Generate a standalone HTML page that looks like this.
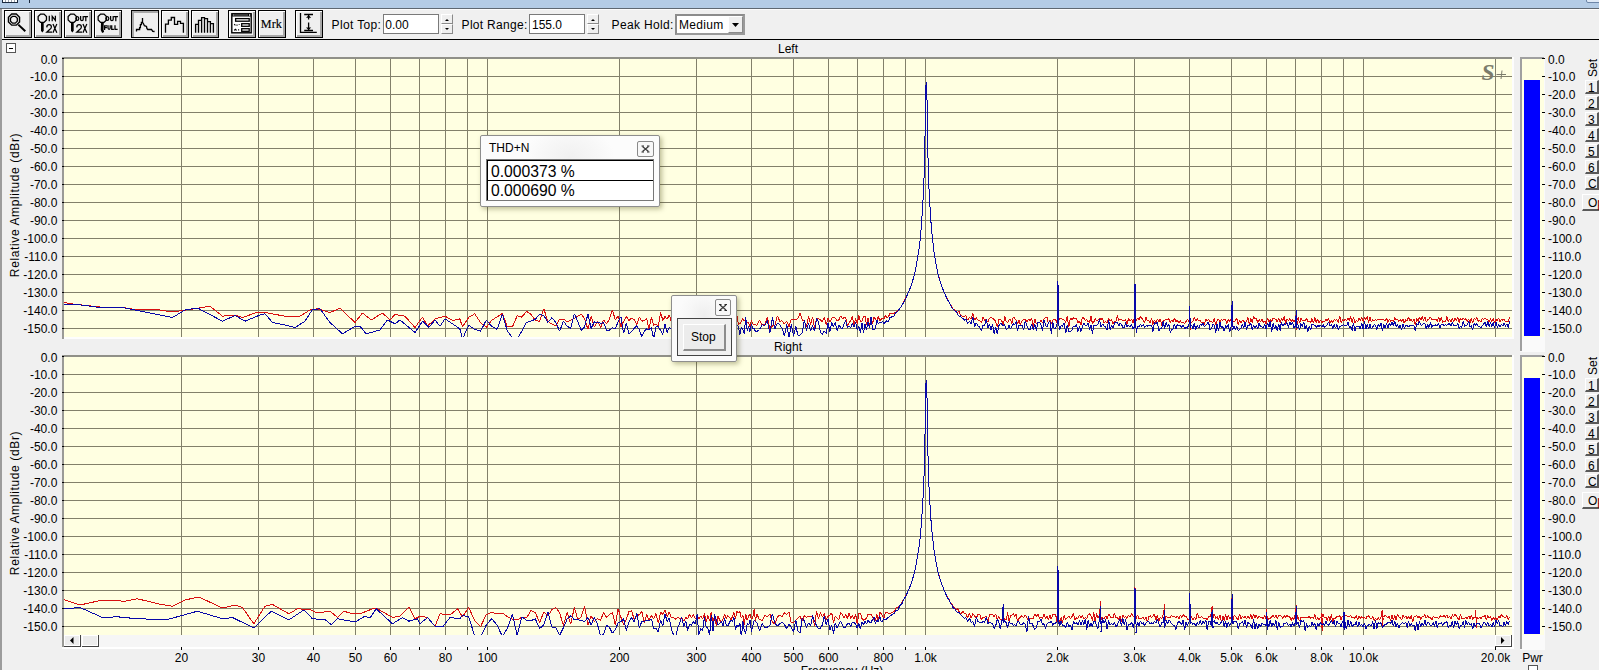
<!DOCTYPE html>
<html><head><meta charset="utf-8"><title>Spectrum</title>
<style>
html,body{margin:0;padding:0;}
body{width:1599px;height:670px;overflow:hidden;position:relative;background:#f0f0f0;font-family:"Liberation Sans", sans-serif;color:#000;}
</style></head><body>
<div style="position:absolute;left:0;top:0;width:1599px;height:8px;background:#b4cce6"></div>
<div style="position:absolute;left:0px;top:8px;width:1599px;height:1px;background:#5f6872"></div>
<div style="position:absolute;left:0px;top:9px;width:1599px;height:1px;background:#fcfcfc"></div>
<div style="position:absolute;left:0px;top:9px;width:2px;height:661px;background:#9c9c9c"></div>
<div style="position:absolute;left:2px;top:39px;width:1597px;height:1px;background:#000"></div>
<div style="position:absolute;left:2px;top:0px;width:16px;height:3px;background:#fff;border:0"></div>
<div style="position:absolute;left:2px;top:2px;width:16px;height:1px;background:#1b2a3e"></div>
<div style="position:absolute;left:5px;top:0px;width:1px;height:2px;background:#9aa4b0"></div>
<div style="position:absolute;left:8px;top:0px;width:1px;height:2px;background:#9aa4b0"></div>
<div style="position:absolute;left:11px;top:0px;width:1px;height:2px;background:#9aa4b0"></div>
<div style="position:absolute;left:14px;top:0px;width:1px;height:2px;background:#9aa4b0"></div>
<div style="position:absolute;left:2px;top:0px;width:1px;height:3px;background:#1b2a3e"></div>
<div style="position:absolute;left:17px;top:0px;width:1px;height:3px;background:#1b2a3e"></div>
<div style="position:absolute;left:29px;top:0px;width:1px;height:3px;background:#1b2a3e"></div>
<div style="position:absolute;left:1586px;top:-4px;width:20px;height:7px;box-sizing:border-box;border:1px solid #6d86a8;border-radius:2px;background:#dfeaf7"></div>
<div style="position:absolute;left:4px;top:10px;width:26px;height:26px;border:1px solid #000;background:#efefef;box-shadow:inset 1px 1px 0 #fff, inset -2px -2px 0 #a8a8a8"></div>
<div style="position:absolute;left:34px;top:10px;width:26px;height:26px;border:1px solid #000;background:#efefef;box-shadow:inset 1px 1px 0 #fff, inset -2px -2px 0 #a8a8a8"></div>
<div style="position:absolute;left:64px;top:10px;width:26px;height:26px;border:1px solid #000;background:#efefef;box-shadow:inset 1px 1px 0 #fff, inset -2px -2px 0 #a8a8a8"></div>
<div style="position:absolute;left:94px;top:10px;width:26px;height:26px;border:1px solid #000;background:#efefef;box-shadow:inset 1px 1px 0 #fff, inset -2px -2px 0 #a8a8a8"></div>
<div style="position:absolute;left:161px;top:10px;width:26px;height:26px;border:1px solid #000;background:#efefef;box-shadow:inset 1px 1px 0 #fff, inset -2px -2px 0 #a8a8a8"></div>
<div style="position:absolute;left:191px;top:10px;width:26px;height:26px;border:1px solid #000;background:#efefef;box-shadow:inset 1px 1px 0 #fff, inset -2px -2px 0 #a8a8a8"></div>
<div style="position:absolute;left:228px;top:10px;width:26px;height:26px;border:1px solid #000;background:#efefef;box-shadow:inset 1px 1px 0 #fff, inset -2px -2px 0 #a8a8a8"></div>
<div style="position:absolute;left:258px;top:10px;width:26px;height:26px;border:1px solid #000;background:#efefef;box-shadow:inset 1px 1px 0 #fff, inset -2px -2px 0 #a8a8a8"></div>
<div style="position:absolute;left:295px;top:10px;width:26px;height:26px;border:1px solid #000;background:#efefef;box-shadow:inset 1px 1px 0 #fff, inset -2px -2px 0 #a8a8a8"></div>
<div style="position:absolute;left:131px;top:10px;width:26px;height:26px;border:1px solid #000;background:#efefef;box-shadow:inset 2px 2px 0 #a8a8a8"></div>
<svg style="position:absolute;left:0;top:0" width="330" height="40" viewBox="0 0 330 40"><polygon points="19.54,21.90 16.30,25.14 11.70,25.14 8.46,21.90 8.46,17.30 11.70,14.06 16.30,14.06 19.54,17.30" fill="none" stroke="#000" stroke-width="1.4"/><polygon points="17.32,21.12 15.32,23.12 12.48,23.12 10.48,21.12 10.48,18.28 12.48,16.28 15.32,16.28 17.32,18.28" fill="none" stroke="#000" stroke-width="1.3"/><line x1="18.3" y1="24.6" x2="25.3" y2="31.3" stroke="#000" stroke-width="2"/><path d="M46.8,26.728 Q47.0,24.6 49.099999999999994,24.6 Q51.4,24.6 51.4,26.880000000000003 Q51.4,28.400000000000002 49.099999999999994,30.072000000000003 L46.8,32.2 H51.4" fill="none" stroke="#000" stroke-width="1.25" stroke-linecap="square" stroke-linejoin="miter"/><path d="M53.2,24.6 L56.6,32.2 M56.6,24.6 L53.2,32.2" fill="none" stroke="#000" stroke-width="1.25" stroke-linecap="square" stroke-linejoin="miter"/><path d="M76.8,26.728 Q77.0,24.6 79.1,24.6 Q81.39999999999999,24.6 81.39999999999999,26.880000000000003 Q81.39999999999999,28.400000000000002 79.1,30.072000000000003 L76.8,32.2 H81.39999999999999" fill="none" stroke="#000" stroke-width="1.25" stroke-linecap="square" stroke-linejoin="miter"/><path d="M83.2,24.6 L86.60000000000001,32.2 M86.60000000000001,24.6 L83.2,32.2" fill="none" stroke="#000" stroke-width="1.25" stroke-linecap="square" stroke-linejoin="miter"/><polygon points="46.46,20.02 44.02,22.46 40.58,22.46 38.14,20.02 38.14,16.58 40.58,14.14 44.02,14.14 46.46,16.58" fill="none" stroke="#000" stroke-width="1.3"/><path d="M41.0,22.5 h2.7 v8.3 l-1.35,1.8 l-1.35,-1.8 z" fill="#000"/><path d="M49.3,16.3 V20.5" fill="none" stroke="#000" stroke-width="1.25" stroke-linecap="square" stroke-linejoin="miter"/><path d="M52.2,20.5 V16.3 L55.400000000000006,20.5 V16.3" fill="none" stroke="#000" stroke-width="1.25" stroke-linecap="square" stroke-linejoin="miter"/><polygon points="76.46,20.02 74.02,22.46 70.58,22.46 68.14,20.02 68.14,16.58 70.58,14.14 74.02,14.14 76.46,16.58" fill="none" stroke="#000" stroke-width="1.3"/><path d="M71.0,22.5 h2.7 v8.3 l-1.35,1.8 l-1.35,-1.8 z" fill="#000"/><ellipse cx="77.3" cy="18.55" rx="1.5" ry="1.95" fill="none" stroke="#000" stroke-width="1.25"/><path d="M80.6,16.6 V19.135 Q80.6,20.5 81.89999999999999,20.5 Q83.19999999999999,20.5 83.19999999999999,19.135 V16.6" fill="none" stroke="#000" stroke-width="1.25" stroke-linecap="square" stroke-linejoin="miter"/><path d="M84.2,16.6 H87.4 M85.8,16.6 V20.5" fill="none" stroke="#000" stroke-width="1.25" stroke-linecap="square" stroke-linejoin="miter"/><polygon points="106.46,20.02 104.02,22.46 100.58,22.46 98.14,20.02 98.14,16.58 100.58,14.14 104.02,14.14 106.46,16.58" fill="none" stroke="#000" stroke-width="1.3"/><path d="M101.0,22.5 h2.8 l-0.3,7 l0.6,2.5 l-2,1 l-1.3,-3 z" fill="#000"/><ellipse cx="107.3" cy="18.55" rx="1.5" ry="1.95" fill="none" stroke="#000" stroke-width="1.25"/><path d="M110.6,16.6 V19.135 Q110.6,20.5 111.89999999999999,20.5 Q113.19999999999999,20.5 113.19999999999999,19.135 V16.6" fill="none" stroke="#000" stroke-width="1.25" stroke-linecap="square" stroke-linejoin="miter"/><path d="M114.2,16.6 H117.4 M115.8,16.6 V20.5" fill="none" stroke="#000" stroke-width="1.25" stroke-linecap="square" stroke-linejoin="miter"/><path d="M104.6,29.299999999999997 V25.9 H106.6 M104.6,27.599999999999998 H106.3" fill="none" stroke="#000" stroke-width="1.25" stroke-linecap="square" stroke-linejoin="miter"/><path d="M108.0,25.9 V28.11 Q108.0,29.299999999999997 109.1,29.299999999999997 Q110.2,29.299999999999997 110.2,28.11 V25.9" fill="none" stroke="#000" stroke-width="1.25" stroke-linecap="square" stroke-linejoin="miter"/><path d="M111.7,25.9 V29.299999999999997 H113.3" fill="none" stroke="#000" stroke-width="1.25" stroke-linecap="square" stroke-linejoin="miter"/><path d="M115.0,25.9 V29.299999999999997 H117.0" fill="none" stroke="#000" stroke-width="1.25" stroke-linecap="square" stroke-linejoin="miter"/><polyline points="136.5,31.6 136.5,29.5 139.6,29.5 139.6,27.6 140.4,27.6 140.4,24.7 141.4,24.7 141.4,22.4 142.5,22.4 142.5,18.1 142.5,22.4 143.5,23.8 144.4,25.7 146.5,26.5 146.9,28.4 147.7,29.5 151.5,29.5 152.7,31.3 154.6,31.5" fill="none" stroke="#000" stroke-width="1.3"/><polyline points="165.5,32.8 165.5,24.2 168.4,24.2 168.4,20.2 171.3,20.2 171.3,17.5 174.5,17.5 174.5,24.4 177.6,24.4 177.6,21.3 180.5,21.3 180.5,23.4 183.4,23.4 183.4,32.8" fill="none" stroke="#000" stroke-width="1.3"/><path d="M195.6,32.8 V24.3 H198.5 V20.3 H201.6 V17.6 H204.5 V18.7 H207.5 V21.6 H210.4 V23.6 H213.4 V32.8 M198.5,24.3 V32.8 M201.6,20.3 V32.8 M204.5,18.7 V32.8 M207.5,21.6 V32.8 M210.4,23.6 V32.8" fill="none" stroke="#000" stroke-width="1.3"/><rect x="231.8" y="13.8" width="19.4" height="19" fill="#fff" stroke="#000" stroke-width="1.4"/><rect x="232" y="13.5" width="19" height="3" fill="#000"/><path d="M234.5,15 H247.5" stroke="#fff" stroke-width="0.9" stroke-dasharray="1,1"/><rect x="249" y="14.3" width="1.2" height="1.4" fill="#fff"/><rect x="232.9" y="14.3" width="0.7" height="1.4" fill="#fff"/><rect x="235.6" y="18.6" width="13.6" height="2.6" fill="none" stroke="#000" stroke-width="1.3"/><rect x="241.7" y="23.7" width="7.5" height="2.6" fill="none" stroke="#000" stroke-width="1.3"/><rect x="241.7" y="28.7" width="7.5" height="2.6" fill="none" stroke="#000" stroke-width="1.3"/><path d="M234.2,24.2 l1.2,1.2 M237,24.5 v1.3 M239.2,24.3 v0.8 M234.2,30.3 l1.2,-1.1 l1.2,1.1 M238.6,29.2 v1.4" stroke="#000" stroke-width="1.1"/><text x="260.8" y="27.9" font-family="Liberation Serif" font-size="13.2" stroke="#000" stroke-width="0.15" textLength="21" lengthAdjust="spacingAndGlyphs">Mrk</text><path d="M300.5,13 V32.4 H316.8" fill="none" stroke="#000" stroke-width="1.3"/><path d="M304.2,14.5 H313 M304.2,30.5 H313 M308.6,15 V19.5 M308.6,22.5 V30" fill="none" stroke="#000" stroke-width="1.3"/><path d="M306,17.8 L308.6,15.3 L311.2,17.8 Z M306,27.6 L308.6,30.1 L311.2,27.6 Z" fill="#000"/></svg>
<div style="position:absolute;left:331.6px;top:18.84px;font-size:12px;line-height:12px;white-space:nowrap;color:#000;letter-spacing:0.35px">Plot Top:</div>
<div style="position:absolute;left:383px;top:14px;width:56px;height:20px;box-sizing:border-box;border:1px solid #7a7a7a;background:#fff"></div>
<div style="position:absolute;left:385.3px;top:18.54px;font-size:12px;line-height:12px;white-space:nowrap;color:#000;">0.00</div>
<div style="position:absolute;left:461.6px;top:18.84px;font-size:12px;line-height:12px;white-space:nowrap;color:#000;letter-spacing:0.3px">Plot Range:</div>
<div style="position:absolute;left:529px;top:14px;width:56px;height:20px;box-sizing:border-box;border:1px solid #7a7a7a;background:#fff"></div>
<div style="position:absolute;left:532px;top:18.84px;font-size:12px;line-height:12px;white-space:nowrap;color:#000;">155.0</div>
<div style="position:absolute;left:441px;top:14px;width:12px;height:10px;box-sizing:border-box;background:#efefef;border-right:1px solid #8a8a8a;border-bottom:1px solid #8a8a8a;border-left:1px solid #fff;border-top:1px solid #fff"></div>
<div style="position:absolute;left:441px;top:24px;width:12px;height:10px;box-sizing:border-box;background:#efefef;border-right:1px solid #8a8a8a;border-bottom:1px solid #8a8a8a;border-left:1px solid #fff;border-top:1px solid #fff"></div>
<svg style="position:absolute;left:441px;top:14px" width="12" height="20"><path d="M4,7 h4 l-2,-2 z M4,14 h4 l-2,2 z" fill="#000"/></svg>
<div style="position:absolute;left:587px;top:14px;width:12px;height:10px;box-sizing:border-box;background:#efefef;border-right:1px solid #8a8a8a;border-bottom:1px solid #8a8a8a;border-left:1px solid #fff;border-top:1px solid #fff"></div>
<div style="position:absolute;left:587px;top:24px;width:12px;height:10px;box-sizing:border-box;background:#efefef;border-right:1px solid #8a8a8a;border-bottom:1px solid #8a8a8a;border-left:1px solid #fff;border-top:1px solid #fff"></div>
<svg style="position:absolute;left:587px;top:14px" width="12" height="20"><path d="M4,7 h4 l-2,-2 z M4,14 h4 l-2,2 z" fill="#000"/></svg>
<div style="position:absolute;left:611.6px;top:18.84px;font-size:12px;line-height:12px;white-space:nowrap;color:#000;letter-spacing:0.33px">Peak Hold:</div>
<div style="position:absolute;left:675px;top:14px;width:70px;height:21px;box-sizing:border-box;border:2px solid #8c8c8c;border-right-color:#9a9a9a;border-bottom-color:#9a9a9a;background:#fff"></div>
<div style="position:absolute;left:679px;top:19.34px;font-size:12px;line-height:12px;white-space:nowrap;color:#000;letter-spacing:0.3px">Medium</div>
<div style="position:absolute;left:728px;top:16px;width:15px;height:17px;box-sizing:border-box;background:#efefef;border-right:1px solid #8a8a8a;border-bottom:1px solid #8a8a8a;border-left:1px solid #fff;border-top:1px solid #fff"></div>
<svg style="position:absolute;left:728px;top:16px" width="15" height="17"><path d="M4,7 h7 l-3.5,4 z" fill="#000"/></svg>
<div style="position:absolute;left:6px;top:43px;width:10px;height:10px;box-sizing:border-box;border:1px solid #555;background:#fff"></div>
<div style="position:absolute;left:9px;top:48px;width:4px;height:1px;background:#000"></div>
<div style="position:absolute;left:588px;width:400px;text-align:center;top:42.84px;font-size:12px;line-height:12px;white-space:nowrap;color:#000;">Left</div>
<div style="position:absolute;left:588px;width:400px;text-align:center;top:340.84px;font-size:12px;line-height:12px;white-space:nowrap;color:#000;">Right</div>
<svg style="position:absolute;left:0;top:0" width="1599" height="670" viewBox="0 0 1599 670" shape-rendering="auto"><rect x="62" y="57" width="1452" height="282" fill="#fdfdfd"/><rect x="62" y="57" width="1450" height="2" fill="#909088"/><rect x="62" y="57" width="2" height="282" fill="#9a9a96"/><rect x="64" y="59" width="1448" height="278" fill="#ffffe1"/><path d="M64,76.5H1512M64,94.5H1512M64,112.5H1512M64,130.5H1512M64,148.5H1512M64,166.5H1512M64,184.5H1512M64,202.5H1512M64,220.5H1512M64,238.5H1512M64,256.5H1512M64,274.5H1512M64,292.5H1512M64,310.5H1512M64,328.5H1512M181.5,59V337M258.5,59V337M313.5,59V337M355.5,59V337M390.5,59V337M419.5,59V337M445.5,59V337M467.5,59V337M487.5,59V337M619.5,59V337M696.5,59V337M751.5,59V337M793.5,59V337M828.5,59V337M857.5,59V337M883.5,59V337M905.5,59V337M925.5,59V337M1057.5,59V337M1134.5,59V337M1189.5,59V337M1231.5,59V337M1266.5,59V337M1295.5,59V337M1321.5,59V337M1343.5,59V337M1363.5,59V337M1495.5,59V337" stroke="#82806a" stroke-width="1" fill="none"/><path d="M62,58.5H64M62,76.5H64M62,94.5H64M62,112.5H64M62,130.5H64M62,148.5H64M62,166.5H64M62,184.5H64M62,202.5H64M62,220.5H64M62,238.5H64M62,256.5H64M62,274.5H64M62,292.5H64M62,310.5H64M62,328.5H64" stroke="#000" stroke-width="1"/><rect x="62" y="355" width="1452" height="294" fill="#fdfdfd"/><rect x="62" y="355" width="1450" height="2" fill="#909088"/><rect x="62" y="355" width="2" height="292" fill="#9a9a96"/><rect x="64" y="357" width="1448" height="278" fill="#ffffe1"/><path d="M64,374.5H1512M64,392.5H1512M64,410.5H1512M64,428.5H1512M64,446.5H1512M64,464.5H1512M64,482.5H1512M64,500.5H1512M64,518.5H1512M64,536.5H1512M64,554.5H1512M64,572.5H1512M64,590.5H1512M64,608.5H1512M64,626.5H1512M181.5,357V635M258.5,357V635M313.5,357V635M355.5,357V635M390.5,357V635M419.5,357V635M445.5,357V635M467.5,357V635M487.5,357V635M619.5,357V635M696.5,357V635M751.5,357V635M793.5,357V635M828.5,357V635M857.5,357V635M883.5,357V635M905.5,357V635M925.5,357V635M1057.5,357V635M1134.5,357V635M1189.5,357V635M1231.5,357V635M1266.5,357V635M1295.5,357V635M1321.5,357V635M1343.5,357V635M1363.5,357V635M1495.5,357V635" stroke="#82806a" stroke-width="1" fill="none"/><path d="M62,356.5H64M62,374.5H64M62,392.5H64M62,410.5H64M62,428.5H64M62,446.5H64M62,464.5H64M62,482.5H64M62,500.5H64M62,518.5H64M62,536.5H64M62,554.5H64M62,572.5H64M62,590.5H64M62,608.5H64M62,626.5H64" stroke="#000" stroke-width="1"/><defs><clipPath id="c1"><rect x="64" y="59" width="1448" height="278"/></clipPath><clipPath id="c2"><rect x="64" y="357" width="1448" height="278"/></clipPath></defs><g clip-path="url(#c1)"><polyline points="63.8,302.5 72.5,304.0 100.0,307.0 122.5,307.5 135.0,309.5 160.0,310.0 172.5,312.0 182.5,310.5 190.0,309.5 210.0,306.2 222.5,316.2 235.0,315.0 242.5,317.5 255.0,313.0 265.0,312.5 285.0,316.2 300.0,316.2 310.0,310.0 317.5,308.8 330.0,312.5 340.0,308.2 355.0,322.5 362.5,313.0 371.2,320.0 382.5,313.0 390.0,320.0 395.0,314.5 405.0,316.2 415.0,327.5 422.5,317.0 427.5,326.2 435.0,318.8 445.0,316.2 452.5,320.5 459.8,318.8 462.5,326.8 468.7,317.4 474.7,313.8 480.6,322.6 486.3,327.3 491.8,320.1 497.1,317.0 502.4,313.4 507.4,326.6 512.4,327.0 517.2,315.8 521.9,317.1 526.5,311.2 530.9,314.3 535.3,320.3 539.6,321.3 543.8,308.8 547.9,321.4 551.9,324.1 555.8,326.0 559.6,319.3 563.4,319.1 567.1,321.7 570.7,320.2 574.3,318.4 577.8,316.2 581.2,314.1 584.6,318.8 587.9,329.3 591.1,316.2 594.3,327.3 597.5,320.8 600.6,327.5 603.6,319.9 606.6,323.9 609.5,318.8 612.4,309.7 615.3,320.2 618.1,315.7 620.9,326.7 623.6,321.4 626.3,316.6 629.0,320.4 631.6,318.1 634.2,319.5 636.8,325.0 639.3,317.2 641.8,321.1 644.2,320.8 646.6,318.2 649.0,329.6 651.4,317.4 653.7,325.4 656.0,324.0 658.3,326.4 660.6,312.0 662.8,320.7 665.0,316.6 667.2,319.2 669.3,315.0 671.4,321.8 673.5,321.2 675.6,323.2 677.7,316.9 679.7,320.9 681.7,322.1 683.7,327.1 685.7,315.1 687.6,318.6 689.6,318.6 691.5,322.2 693.4,316.8 695.3,323.8 697.1,320.3 698.9,329.4 700.8,316.1 702.6,319.4 704.4,319.9 706.1,319.9 707.9,320.9 709.6,320.0 711.3,319.1 713.0,323.7 714.7,321.7 716.4,319.3 718.1,319.8 719.7,319.1 721.4,323.4 723.0,321.3 724.6,320.0 726.2,318.3 727.7,322.0 729.3,321.0 730.9,318.4 732.4,319.3 733.9,318.0 735.5,319.9 737.0,315.8 738.4,324.4 739.9,323.7 741.4,321.5 742.9,318.5 744.3,321.0 745.7,319.1 747.2,322.6 748.6,322.4 750.0,327.2 751.4,320.1 752.8,323.8 754.1,324.7 755.5,324.9 756.8,325.5 759.5,320.0 762.2,325.0 764.8,324.9 767.3,316.7 769.9,328.6 772.4,326.0 774.9,325.7 777.3,315.7 779.7,321.2 782.1,320.8 784.4,324.1 786.7,320.9 789.0,326.5 791.3,319.3 793.5,319.2 795.8,319.3 797.9,318.6 800.1,313.2 802.2,319.7 804.4,321.2 806.4,327.2 808.5,316.1 810.6,324.4 812.6,316.9 814.6,327.9 816.6,318.6 818.5,318.8 820.5,319.9 822.4,321.9 824.3,316.8 826.2,324.8 828.0,318.3 829.9,322.1 831.7,318.2 833.5,317.3 835.3,318.2 837.1,321.0 838.9,319.7 840.6,315.8 842.3,318.8 844.0,317.7 845.7,317.7 847.4,325.3 849.1,323.2 850.8,320.2 852.4,316.6 854.0,325.6 855.6,318.6 857.2,324.0 858.8,315.2 860.4,321.7 861.9,321.1 863.5,316.2 865.0,316.0 866.5,325.1 868.1,317.7 869.6,325.9 871.0,320.1 872.5,323.7 874.0,317.2 875.4,319.2 876.9,321.4 878.3,315.8 879.7,321.1 881.1,319.3 882.5,318.5 883.9,319.0 885.3,315.8 886.7,317.2 888.0,317.4 890.0,313.5 892.0,313.0 894.0,313.4 896.0,311.8 897.9,310.7 899.8,308.7 901.7,305.7 903.6,301.7 905.5,298.7 907.3,294.8 909.1,290.5 911.0,286.1 912.7,280.6 914.5,274.1 916.3,265.5 918.0,255.2 919.7,244.6 920.3,237.8 920.9,230.9 921.5,224.1 922.0,216.2 922.6,206.7 923.2,197.3 923.7,185.3 924.3,172.4 924.8,149.1 925.4,110.7 925.9,86.6 926.3,81.9 926.5,84.6 927.1,102.3 927.6,137.4 928.2,167.5 928.7,181.0 929.2,193.6 929.8,203.0 930.3,212.1 930.9,220.9 931.4,227.4 932.0,233.8 933.6,249.1 935.1,258.5 936.7,267.9 938.3,274.9 939.8,280.5 941.4,285.4 942.9,289.0 944.4,292.8 945.9,296.2 947.4,298.7 948.9,301.6 950.4,304.4 951.8,306.7 953.3,309.7 954.7,309.2 956.1,311.7 957.6,312.1 959.0,311.5 960.4,315.3 961.7,316.0 963.1,317.1 964.5,316.3 965.8,315.7 967.6,320.0 969.4,317.6 971.1,318.8 972.9,313.2 974.6,320.0 976.3,317.7 978.0,320.3 979.7,320.3 981.4,322.8 983.0,317.1 984.6,320.3 986.3,319.7 987.9,322.1 989.5,318.1 991.1,317.3 992.6,318.3 994.2,319.4 995.7,321.5 997.3,327.3 998.8,319.7 1000.3,318.9 1001.8,320.8 1003.3,326.4 1004.7,316.2 1006.2,321.3 1007.6,322.8 1009.1,319.9 1010.5,319.0 1011.9,324.0 1013.3,317.0 1014.7,318.4 1016.1,320.2 1017.5,324.2 1018.9,319.7 1020.2,324.4 1021.9,321.3 1023.6,319.1 1025.2,319.1 1026.9,322.0 1028.5,319.0 1030.1,321.0 1031.7,318.2 1033.3,327.0 1034.8,318.8 1036.4,323.8 1037.9,322.1 1039.5,322.4 1041.0,320.4 1042.5,323.1 1044.0,318.8 1045.5,317.4 1047.0,317.3 1048.4,323.2 1049.9,320.2 1051.3,323.8 1052.7,320.2 1054.2,319.6 1055.6,319.6 1057.0,322.4 1057.4,322.4 1057.9,303.7 1058.4,321.7 1058.9,324.2 1058.4,321.0 1059.7,318.2 1061.1,317.9 1062.5,320.0 1064.1,319.8 1065.7,322.4 1067.3,316.4 1068.8,327.1 1070.4,318.0 1072.0,319.6 1073.5,317.8 1075.0,318.9 1076.5,318.5 1078.0,322.6 1079.5,321.1 1081.0,325.0 1082.5,316.8 1083.9,318.3 1085.4,320.8 1086.8,319.3 1088.2,321.7 1089.6,322.4 1091.0,316.1 1092.4,323.6 1093.8,322.1 1095.2,318.4 1096.5,320.5 1097.9,320.3 1099.5,318.5 1101.0,319.3 1102.6,318.4 1104.1,323.1 1105.6,321.6 1107.1,323.0 1108.6,318.7 1110.1,320.9 1111.5,319.5 1113.0,323.8 1114.5,321.7 1115.9,321.8 1117.3,315.6 1118.7,320.3 1120.1,319.0 1121.5,319.9 1122.9,320.8 1124.3,320.7 1125.6,319.7 1127.0,324.4 1128.5,318.6 1130.1,321.0 1131.6,319.3 1133.1,323.1 1134.6,316.8 1134.5,316.8 1135.0,303.7 1135.5,321.7 1136.0,318.6 1136.0,321.1 1137.5,318.1 1139.0,319.8 1140.4,316.7 1141.8,318.2 1143.2,320.3 1144.7,322.3 1146.1,317.2 1147.4,320.6 1148.8,320.3 1150.2,322.9 1151.6,318.4 1152.9,324.8 1154.4,320.0 1155.9,323.3 1157.4,319.1 1158.9,322.0 1160.3,318.8 1161.8,326.1 1163.2,320.7 1164.6,320.3 1166.1,319.0 1167.5,320.0 1168.9,318.5 1170.3,322.9 1171.6,319.8 1173.0,322.2 1174.4,318.0 1175.9,321.5 1177.3,320.3 1178.8,322.8 1180.3,320.7 1181.7,322.7 1183.2,322.3 1184.6,323.9 1186.0,321.6 1187.4,318.9 1188.8,321.9 1189.2,321.9 1189.7,311.8 1190.2,329.8 1190.7,323.7 1190.2,322.5 1191.6,322.2 1192.9,321.0 1194.3,317.3 1195.8,321.2 1197.3,318.6 1198.7,321.1 1200.2,319.9 1201.6,323.1 1203.0,322.1 1204.4,324.5 1205.9,319.4 1207.2,320.7 1208.6,319.0 1210.0,321.9 1211.4,321.8 1212.7,322.4 1214.2,318.6 1215.7,324.5 1217.1,320.5 1218.5,319.1 1220.0,321.4 1221.4,319.8 1222.8,320.4 1224.2,319.2 1225.6,320.1 1226.9,323.8 1228.3,319.2 1229.6,321.8 1231.1,319.2 1231.6,319.2 1232.1,306.4 1232.6,324.4 1233.1,321.0 1232.5,321.4 1234.0,322.0 1235.4,320.8 1236.8,317.7 1238.2,324.6 1239.6,319.8 1241.0,323.1 1242.4,320.2 1243.7,321.2 1245.1,322.4 1246.5,321.6 1247.9,317.1 1249.4,325.2 1250.8,318.1 1252.2,322.6 1253.6,316.3 1255.0,319.3 1256.3,317.8 1257.7,323.1 1259.0,319.6 1260.5,321.8 1261.9,318.8 1263.3,322.4 1264.7,321.0 1266.1,323.7 1267.5,317.8 1268.9,321.8 1270.3,319.1 1271.6,321.6 1273.1,318.2 1274.5,319.0 1275.9,319.1 1277.3,322.2 1278.7,318.2 1280.1,322.7 1281.4,318.4 1282.8,320.9 1284.2,316.5 1285.6,323.4 1287.0,319.4 1288.4,320.6 1289.8,318.5 1291.2,321.8 1292.6,319.4 1293.9,321.8 1295.3,319.9 1295.7,319.9 1296.2,311.8 1296.7,329.8 1297.2,321.7 1296.7,320.2 1298.1,317.6 1299.6,323.2 1300.9,318.0 1302.3,320.9 1303.7,320.3 1305.1,320.7 1306.4,318.2 1307.9,321.4 1309.3,321.5 1310.7,322.4 1312.0,318.6 1313.4,323.1 1314.8,317.5 1316.2,322.6 1317.6,318.9 1319.0,322.7 1320.4,319.9 1321.8,322.4 1323.2,321.5 1324.5,321.8 1325.9,319.5 1327.2,321.0 1328.6,318.4 1330.0,322.5 1331.4,320.2 1332.8,322.9 1334.2,319.3 1335.5,320.4 1336.9,319.7 1338.3,322.5 1339.7,316.0 1341.1,322.5 1342.5,319.6 1343.8,320.9 1345.2,319.0 1346.6,320.3 1348.0,318.2 1349.4,320.6 1350.7,316.2 1352.1,322.5 1353.5,317.3 1354.9,322.6 1356.3,320.5 1357.6,322.0 1359.0,318.6 1360.4,320.4 1361.7,317.4 1363.1,321.6 1364.5,317.1 1365.9,319.7 1367.2,316.4 1368.6,323.1 1370.0,317.5 1371.4,322.1 1372.8,319.7 1374.1,320.5 1375.5,319.7 1376.9,320.2 1378.3,319.7 1379.6,319.8 1381.0,319.0 1382.4,319.9 1383.7,319.5 1385.1,321.3 1386.5,317.7 1387.9,322.5 1389.3,318.9 1390.6,321.5 1392.0,320.4 1393.4,321.4 1394.8,317.6 1396.1,320.1 1397.5,319.2 1398.9,321.4 1400.2,319.4 1401.6,321.3 1403.0,319.5 1404.3,323.3 1405.7,319.7 1407.1,321.0 1408.4,317.0 1409.8,320.6 1411.2,319.6 1412.6,321.5 1413.9,318.8 1415.3,324.7 1416.7,318.6 1418.1,321.6 1419.4,317.0 1420.8,320.2 1422.2,316.4 1423.5,320.7 1424.9,316.8 1426.3,322.3 1427.6,319.8 1429.0,319.4 1430.4,316.8 1431.8,319.3 1433.1,319.7 1434.5,319.3 1435.9,319.4 1437.2,321.4 1438.6,317.2 1440.0,321.4 1441.3,316.9 1442.7,322.6 1444.0,321.0 1445.4,322.2 1446.8,316.4 1448.2,322.1 1449.5,319.0 1450.9,321.9 1452.3,318.6 1453.6,321.7 1455.0,318.1 1456.4,321.1 1457.7,316.8 1459.1,322.4 1460.5,317.9 1461.8,320.1 1463.2,318.3 1464.6,319.3 1465.9,318.9 1467.3,321.9 1468.7,318.9 1470.0,322.9 1471.4,318.3 1472.7,323.3 1474.1,318.3 1475.5,319.8 1476.8,317.0 1478.2,321.1 1479.6,320.8 1480.9,321.9 1482.3,318.3 1483.7,319.7 1485.0,317.9 1486.4,319.9 1487.8,319.6 1489.1,322.1 1490.5,318.6 1491.8,321.4 1493.2,318.6 1494.6,322.6 1495.9,319.4 1497.3,320.8 1498.7,317.8 1500.0,321.9 1501.4,319.0 1502.7,320.2 1504.1,319.4 1505.5,322.1 1506.8,321.0 1508.2,321.4 1509.6,316.9" fill="none" stroke="#d81010" stroke-width="1" stroke-linejoin="bevel" shape-rendering="crispEdges"/><polyline points="63.8,305.0 75.0,304.2 100.0,307.5 122.5,307.5 172.5,317.5 185.0,310.0 197.5,308.0 222.5,321.2 235.0,315.5 245.0,321.2 260.0,315.0 265.0,313.8 272.5,322.5 285.0,325.0 295.0,327.5 305.0,321.2 312.5,309.5 320.0,308.8 330.0,322.5 342.5,333.8 355.0,326.2 360.0,326.2 366.2,333.8 380.0,330.0 387.5,320.0 395.0,323.8 400.0,320.0 415.0,332.5 422.5,321.2 428.8,327.5 435.0,320.0 440.0,326.2 445.0,318.8 459.8,328.8 462.5,339.0 468.7,325.2 474.7,329.3 480.6,331.1 486.3,320.1 491.8,326.4 497.1,329.3 502.4,314.3 507.4,331.1 512.4,337.6 517.2,338.5 521.9,331.3 526.5,322.4 530.9,321.1 535.3,319.2 539.6,314.4 543.8,315.3 547.9,322.4 551.9,317.8 555.8,322.3 559.6,331.2 563.4,321.1 567.1,326.2 570.7,328.2 574.3,313.8 577.8,321.5 581.2,330.3 584.6,327.0 587.9,314.0 591.1,328.4 594.3,321.8 597.5,322.5 600.6,323.2 603.6,322.8 606.6,330.2 609.5,330.1 612.4,327.7 615.3,329.2 618.1,321.4 620.9,316.8 623.6,333.3 626.3,323.1 629.0,334.0 631.6,331.7 634.2,328.2 636.8,325.8 639.3,329.8 641.8,336.7 644.2,331.2 646.6,328.9 649.0,329.5 651.4,327.6 653.7,338.8 656.0,326.6 658.3,326.4 660.6,330.7 662.8,334.3 665.0,324.0 667.2,332.5 669.3,326.9 671.4,329.9 673.5,322.0 675.6,331.9 677.7,324.5 679.7,324.4 681.7,327.2 683.7,324.2 685.7,326.7 687.6,327.7 689.6,325.0 691.5,329.9 693.4,323.4 695.3,339.0 697.1,335.1 698.9,325.2 700.8,324.1 702.6,331.3 704.4,327.8 706.1,332.6 707.9,326.9 709.6,327.3 711.3,322.6 713.0,324.0 714.7,326.6 716.4,327.3 718.1,321.6 719.7,330.5 721.4,327.6 723.0,329.5 724.6,320.7 726.2,337.7 727.7,332.3 729.3,335.5 730.9,322.0 732.4,332.6 733.9,326.6 735.5,330.1 737.0,324.8 738.4,326.5 739.9,334.9 741.4,326.7 742.9,329.9 744.3,333.6 745.7,317.0 747.2,330.7 748.6,326.3 750.0,331.5 751.4,323.7 752.8,328.9 754.1,327.7 755.5,331.9 756.8,331.7 759.5,329.5 762.2,324.6 764.8,325.6 767.3,320.4 769.9,333.1 772.4,317.6 774.9,329.2 777.3,323.1 779.7,324.7 782.1,328.3 784.4,335.7 786.7,324.5 789.0,338.2 791.3,323.8 793.5,336.1 795.8,326.4 797.9,335.2 800.1,335.0 802.2,332.7 804.4,320.2 806.4,330.4 808.5,323.2 810.6,331.1 812.6,325.4 814.6,331.3 816.6,317.9 818.5,322.5 820.5,332.5 822.4,334.3 824.3,330.9 826.2,333.4 828.0,322.7 829.9,331.6 831.7,322.2 833.5,326.7 835.3,322.2 837.1,330.8 838.9,324.7 840.6,327.4 842.3,328.9 844.0,324.2 845.7,320.2 847.4,327.5 849.1,326.5 850.8,327.8 852.4,323.5 854.0,327.0 855.6,322.3 857.2,330.0 858.8,325.7 860.4,332.6 861.9,322.8 863.5,332.6 865.0,324.3 866.5,330.0 868.1,321.7 869.6,328.2 871.0,317.1 872.5,329.2 874.0,329.7 875.4,328.8 876.9,320.3 878.3,323.6 879.7,322.0 881.1,323.2 882.5,321.5 883.9,323.8 885.3,322.0 886.7,320.8 888.0,322.1 890.0,317.6 892.0,316.8 894.0,316.1 896.0,312.6 897.9,311.1 899.8,308.4 901.7,305.7 903.6,302.5 905.5,298.7 907.3,295.0 909.1,290.6 911.0,286.1 912.7,280.6 914.5,274.1 916.3,265.5 918.0,255.2 919.7,244.6 920.3,237.8 920.9,230.9 921.5,224.1 922.0,216.2 922.6,206.7 923.2,197.3 923.7,185.3 924.3,172.4 924.8,149.1 925.4,110.7 925.9,86.6 926.3,81.9 926.5,84.6 927.1,102.3 927.6,137.4 928.2,167.5 928.7,181.0 929.2,193.6 929.8,203.0 930.3,212.1 930.9,220.9 931.4,227.4 932.0,233.8 933.6,249.1 935.1,258.5 936.7,267.9 938.3,274.9 939.8,280.6 941.4,285.5 942.9,289.2 944.4,293.0 945.9,296.4 947.4,299.5 948.9,302.1 950.4,305.1 951.8,307.6 953.3,309.3 954.7,311.0 956.1,311.7 957.6,314.0 959.0,316.3 960.4,315.9 961.7,317.8 963.1,318.3 964.5,320.3 965.8,319.0 967.6,324.0 969.4,321.2 971.1,323.5 972.9,317.1 974.6,326.5 976.3,322.8 978.0,326.0 979.7,327.1 981.4,331.1 983.0,324.9 984.6,325.5 986.3,319.3 987.9,328.1 989.5,324.5 991.1,329.7 992.6,324.0 994.2,334.4 995.7,326.9 997.3,334.1 998.8,325.8 1000.3,323.2 1001.8,324.1 1003.3,326.1 1004.7,324.7 1006.2,329.3 1007.6,328.6 1009.1,325.3 1010.5,328.9 1011.9,326.2 1013.3,323.6 1014.7,325.2 1016.1,321.4 1017.5,331.4 1018.9,324.8 1020.2,326.1 1021.9,325.1 1023.6,329.9 1025.2,321.2 1026.9,325.8 1028.5,329.1 1030.1,329.4 1031.7,324.2 1033.3,329.5 1034.8,324.3 1036.4,330.6 1037.9,321.9 1039.5,322.5 1041.0,324.8 1042.5,330.6 1044.0,320.0 1045.5,325.0 1047.0,327.3 1048.4,322.6 1049.9,321.0 1051.3,334.2 1052.7,322.1 1054.2,328.8 1055.6,328.4 1057.0,323.6 1057.4,323.6 1057.9,281.2 1058.4,299.2 1058.9,325.4 1058.4,322.6 1059.7,330.0 1061.1,325.5 1062.5,326.4 1064.1,322.6 1065.7,333.1 1067.3,324.8 1068.8,331.7 1070.4,331.3 1072.0,330.0 1073.5,325.8 1075.0,327.1 1076.5,324.1 1078.0,331.4 1079.5,326.1 1081.0,331.4 1082.5,325.7 1083.9,323.4 1085.4,325.9 1086.8,325.6 1088.2,322.8 1089.6,329.4 1091.0,325.2 1092.4,333.9 1093.8,325.1 1095.2,325.3 1096.5,326.0 1097.9,324.1 1099.5,319.3 1101.0,327.1 1102.6,323.8 1104.1,326.1 1105.6,326.9 1107.1,330.2 1108.6,319.8 1110.1,329.8 1111.5,325.2 1113.0,328.2 1114.5,323.0 1115.9,322.5 1117.3,322.5 1118.7,326.2 1120.1,323.4 1121.5,324.1 1122.9,327.9 1124.3,327.9 1125.6,322.3 1127.0,326.8 1128.5,325.1 1130.1,327.2 1131.6,324.3 1133.1,328.9 1134.6,326.5 1134.5,326.5 1135.0,283.9 1135.5,301.9 1136.0,328.3 1136.0,332.9 1137.5,327.0 1139.0,326.5 1140.4,324.2 1141.8,326.5 1143.2,324.4 1144.7,327.3 1146.1,325.9 1147.4,326.1 1148.8,325.2 1150.2,325.5 1151.6,325.3 1152.9,331.8 1154.4,322.3 1155.9,323.5 1157.4,322.3 1158.9,330.6 1160.3,328.7 1161.8,328.5 1163.2,320.7 1164.6,328.8 1166.1,322.4 1167.5,326.6 1168.9,324.3 1170.3,332.6 1171.6,329.7 1173.0,329.2 1174.4,323.9 1175.9,329.0 1177.3,324.5 1178.8,325.7 1180.3,325.5 1181.7,327.4 1183.2,325.2 1184.6,329.0 1186.0,327.2 1187.4,328.5 1188.8,323.9 1189.2,323.9 1189.7,306.4 1190.2,324.4 1190.7,325.7 1190.2,328.0 1191.6,324.7 1192.9,329.0 1194.3,323.3 1195.8,330.0 1197.3,325.1 1198.7,328.3 1200.2,324.3 1201.6,325.2 1203.0,323.2 1204.4,326.6 1205.9,325.0 1207.2,323.5 1208.6,322.0 1210.0,330.2 1211.4,328.6 1212.7,324.6 1214.2,325.0 1215.7,332.7 1217.1,324.0 1218.5,330.9 1220.0,322.2 1221.4,328.2 1222.8,326.7 1224.2,331.3 1225.6,325.0 1226.9,327.4 1228.3,324.1 1229.6,332.2 1231.1,326.3 1231.6,326.3 1232.1,301.5 1232.6,319.5 1233.1,328.1 1232.5,329.7 1234.0,326.1 1235.4,329.9 1236.8,325.9 1238.2,331.1 1239.6,329.6 1241.0,328.1 1242.4,324.2 1243.7,328.3 1245.1,321.7 1246.5,330.0 1247.9,325.4 1249.4,325.5 1250.8,323.6 1252.2,329.7 1253.6,325.4 1255.0,328.2 1256.3,325.4 1257.7,329.1 1259.0,322.9 1260.5,326.6 1261.9,326.9 1263.3,327.4 1264.7,324.3 1266.1,328.8 1267.5,322.8 1268.9,327.1 1270.3,321.1 1271.6,332.0 1273.1,323.1 1274.5,328.7 1275.9,325.6 1277.3,330.6 1278.7,323.9 1280.1,330.6 1281.4,322.0 1282.8,326.0 1284.2,323.9 1285.6,324.4 1287.0,322.6 1288.4,327.9 1289.8,321.9 1291.2,325.0 1292.6,322.1 1293.9,328.0 1295.3,326.2 1295.7,326.2 1296.2,310.0 1296.7,328.0 1297.2,328.0 1296.7,324.3 1298.1,324.8 1299.6,329.7 1300.9,323.4 1302.3,326.9 1303.7,321.8 1305.1,329.3 1306.4,325.0 1307.9,331.9 1309.3,325.9 1310.7,330.1 1312.0,324.0 1313.4,325.0 1314.8,325.1 1316.2,327.7 1317.6,325.5 1319.0,326.4 1320.4,325.0 1321.8,327.1 1323.2,324.7 1324.5,327.5 1325.9,326.5 1327.2,324.6 1328.6,322.0 1330.0,326.2 1331.4,324.1 1332.8,328.5 1334.2,324.4 1335.5,328.3 1336.9,324.4 1338.3,330.3 1339.7,326.5 1341.1,325.9 1342.5,325.5 1343.8,324.7 1345.2,325.5 1346.6,325.7 1348.0,322.0 1349.4,327.9 1350.7,326.7 1352.1,330.5 1353.5,322.9 1354.9,330.9 1356.3,326.0 1357.6,326.0 1359.0,326.2 1360.4,329.3 1361.7,323.1 1363.1,329.2 1364.5,320.9 1365.9,328.9 1367.2,324.0 1368.6,329.2 1370.0,324.2 1371.4,329.2 1372.8,326.9 1374.1,324.8 1375.5,325.1 1376.9,329.6 1378.3,324.0 1379.6,326.9 1381.0,322.9 1382.4,330.9 1383.7,324.2 1385.1,328.3 1386.5,323.4 1387.9,328.1 1389.3,322.8 1390.6,325.9 1392.0,322.6 1393.4,325.4 1394.8,321.3 1396.1,326.7 1397.5,324.5 1398.9,327.7 1400.2,325.2 1401.6,329.9 1403.0,323.7 1404.3,328.4 1405.7,325.2 1407.1,325.7 1408.4,327.1 1409.8,325.5 1411.2,325.5 1412.6,325.4 1413.9,325.2 1415.3,331.1 1416.7,323.7 1418.1,324.9 1419.4,321.2 1420.8,325.1 1422.2,325.0 1423.5,323.2 1424.9,323.3 1426.3,329.0 1427.6,324.5 1429.0,327.4 1430.4,322.1 1431.8,327.5 1433.1,325.2 1434.5,325.8 1435.9,324.8 1437.2,325.8 1438.6,323.7 1440.0,327.6 1441.3,324.2 1442.7,324.1 1444.0,326.1 1445.4,324.9 1446.8,325.3 1448.2,324.2 1449.5,323.5 1450.9,326.1 1452.3,322.0 1453.6,326.2 1455.0,324.8 1456.4,325.9 1457.7,323.3 1459.1,328.7 1460.5,326.5 1461.8,327.2 1463.2,321.4 1464.6,326.4 1465.9,325.2 1467.3,325.0 1468.7,320.8 1470.0,326.5 1471.4,325.7 1472.7,329.8 1474.1,323.7 1475.5,325.2 1476.8,323.7 1478.2,326.6 1479.6,326.3 1480.9,328.1 1482.3,325.7 1483.7,324.0 1485.0,322.4 1486.4,327.2 1487.8,321.0 1489.1,326.4 1490.5,322.4 1491.8,326.4 1493.2,322.1 1494.6,328.0 1495.9,322.1 1497.3,327.5 1498.7,324.1 1500.0,326.8 1501.4,324.4 1502.7,326.2 1504.1,323.0 1505.5,326.3 1506.8,323.9 1508.2,327.4 1509.6,321.0" fill="none" stroke="#0808a8" stroke-width="1" stroke-linejoin="bevel" shape-rendering="crispEdges"/></g><g clip-path="url(#c2)"><polyline points="63.8,599.5 80.0,605.0 102.5,600.0 125.0,601.2 137.5,598.8 160.0,604.2 172.5,606.2 185.0,600.0 198.8,597.0 222.5,608.0 235.0,605.0 242.5,607.5 253.8,623.8 265.0,606.2 272.5,604.5 288.8,613.8 297.5,608.8 310.0,609.5 317.5,613.0 330.0,611.2 337.5,617.5 343.8,611.2 352.5,613.8 360.0,613.8 372.5,608.8 377.5,608.8 392.5,617.5 400.0,616.2 408.8,607.0 415.0,618.8 420.0,616.2 427.5,617.5 435.0,626.2 440.0,613.8 450.0,615.0 457.5,608.8 462.5,616.7 468.7,607.3 474.7,620.8 480.6,626.5 486.3,614.6 491.8,612.4 497.1,613.8 502.4,613.0 507.4,616.6 512.4,619.3 517.2,620.1 521.9,617.1 526.5,618.0 530.9,610.7 535.3,612.4 539.6,622.8 543.8,612.0 547.9,616.0 551.9,609.7 555.8,607.7 559.6,612.8 563.4,625.5 567.1,612.3 570.7,624.3 574.3,607.5 577.8,619.4 581.2,616.9 584.6,606.2 587.9,625.3 591.1,615.8 594.3,621.6 597.5,618.7 600.6,620.1 603.6,612.4 606.6,617.5 609.5,614.2 612.4,612.7 615.3,624.8 618.1,608.8 620.9,617.3 623.6,624.5 626.3,619.4 629.0,611.6 631.6,610.9 634.2,619.5 636.8,615.5 639.3,614.8 641.8,611.3 644.2,622.7 646.6,614.6 649.0,620.3 651.4,615.6 653.7,619.1 656.0,613.6 658.3,623.1 660.6,612.3 662.8,614.3 665.0,610.0 667.2,616.5 669.3,611.7 671.4,617.7 673.5,617.9 675.6,619.1 677.7,617.2 679.7,618.6 681.7,617.7 683.7,621.2 685.7,617.5 687.6,618.9 689.6,614.0 691.5,618.1 693.4,614.1 695.3,618.9 697.1,616.0 698.9,618.6 700.8,615.9 702.6,619.1 704.4,613.5 706.1,621.8 707.9,615.6 709.6,620.8 711.3,612.0 713.0,622.9 714.7,615.4 716.4,626.0 718.1,615.9 719.7,620.5 721.4,621.5 723.0,619.4 724.6,614.0 726.2,618.6 727.7,615.4 729.3,617.2 730.9,619.7 732.4,616.8 733.9,612.2 735.5,618.5 737.0,611.6 738.4,613.0 739.9,611.8 741.4,618.3 742.9,615.2 744.3,625.2 745.7,613.8 747.2,620.3 748.6,616.2 750.0,614.4 751.4,618.9 752.8,617.6 754.1,609.0 755.5,620.7 756.8,613.8 759.5,619.8 762.2,620.3 764.8,615.3 767.3,617.1 769.9,614.0 772.4,622.0 774.9,624.0 777.3,617.2 779.7,615.1 782.1,617.0 784.4,612.7 786.7,614.4 789.0,612.4 791.3,623.0 793.5,622.9 795.8,620.1 797.9,617.9 800.1,616.5 802.2,621.1 804.4,615.4 806.4,617.2 808.5,616.0 810.6,616.7 812.6,616.1 814.6,625.7 816.6,610.9 818.5,619.2 820.5,612.3 822.4,617.3 824.3,613.5 826.2,619.6 828.0,616.6 829.9,614.9 831.7,612.8 833.5,622.5 835.3,616.2 837.1,618.4 838.9,619.4 840.6,612.1 842.3,614.5 844.0,617.9 845.7,614.4 847.4,618.7 849.1,612.8 850.8,618.7 852.4,615.5 854.0,618.8 855.6,613.8 857.2,624.2 858.8,613.5 860.4,613.1 861.9,618.5 863.5,620.2 865.0,619.4 866.5,618.4 868.1,613.9 869.6,614.4 871.0,614.0 872.5,616.6 874.0,619.7 875.4,620.2 876.9,614.3 878.3,621.5 879.7,612.3 881.1,613.4 882.5,616.3 883.9,618.0 885.3,613.0 886.7,612.9 888.0,613.0 890.0,613.5 892.0,612.1 894.0,611.9 896.0,608.1 897.9,607.4 899.8,605.6 901.7,602.8 903.6,599.6 905.5,596.6 907.3,592.7 909.1,588.4 911.0,584.0 912.7,578.6 914.5,572.1 916.3,563.5 918.0,553.2 919.7,542.6 920.3,535.8 920.9,528.9 921.5,522.1 922.0,514.2 922.6,504.7 923.2,495.3 923.7,483.3 924.3,470.4 924.8,447.1 925.4,408.7 925.9,384.6 926.3,379.9 926.5,382.6 927.1,400.3 927.6,435.4 928.2,465.5 928.7,479.0 929.2,491.6 929.8,501.0 930.3,510.1 930.9,518.9 931.4,525.4 932.0,531.8 933.6,547.1 935.1,556.5 936.7,565.9 938.3,572.9 939.8,578.5 941.4,583.4 942.9,587.1 944.4,590.9 945.9,594.2 947.4,597.1 948.9,599.4 950.4,602.5 951.8,604.0 953.3,606.5 954.7,608.2 956.1,610.2 957.6,608.8 959.0,611.6 960.4,613.5 961.7,612.9 963.1,611.4 964.5,614.1 965.8,613.3 967.6,618.1 969.4,612.8 971.1,618.0 972.9,613.6 974.6,616.0 976.3,618.3 978.0,614.1 979.7,614.1 981.4,619.9 983.0,617.4 984.6,617.7 986.3,615.7 987.9,623.1 989.5,614.0 991.1,614.6 992.6,614.6 994.2,617.2 995.7,613.7 997.3,619.5 998.8,616.2 1000.3,619.5 1001.8,619.2 1002.6,619.2 1003.1,604.4 1003.6,622.4 1004.1,621.0 1003.3,616.8 1004.7,619.4 1006.2,620.2 1007.6,612.3 1009.1,621.3 1010.5,615.9 1011.9,615.2 1013.3,613.5 1014.7,616.7 1016.1,614.0 1017.5,621.7 1018.9,618.3 1020.2,617.5 1021.9,615.8 1023.6,617.6 1025.2,614.8 1026.9,617.9 1028.5,620.0 1030.1,618.6 1031.7,618.4 1033.3,618.5 1034.8,613.7 1036.4,616.3 1037.9,614.3 1039.5,618.2 1041.0,617.6 1042.5,618.3 1044.0,613.8 1045.5,619.1 1047.0,615.9 1048.4,619.9 1049.9,615.0 1051.3,619.3 1052.7,614.9 1054.2,614.0 1055.6,614.3 1057.0,621.5 1057.4,621.5 1057.9,590.0 1058.4,608.0 1058.9,623.3 1058.4,618.6 1059.7,622.5 1061.1,617.5 1062.5,622.5 1064.1,615.5 1065.7,619.3 1067.3,617.5 1068.8,616.1 1070.4,618.6 1072.0,616.5 1073.5,613.6 1075.0,619.7 1076.5,617.7 1078.0,618.3 1079.5,614.9 1081.0,617.6 1082.5,615.5 1083.9,618.9 1085.4,617.8 1086.8,618.5 1088.2,614.7 1089.6,613.9 1091.0,616.2 1092.4,620.6 1093.8,612.5 1095.2,622.0 1096.5,613.5 1097.9,617.9 1099.5,615.3 1099.8,615.3 1100.3,600.8 1100.8,618.8 1101.3,617.1 1101.0,619.8 1102.6,617.3 1104.1,619.1 1105.6,615.8 1107.1,618.8 1108.6,613.7 1110.1,616.4 1111.5,617.9 1113.0,617.6 1114.5,612.8 1115.9,618.2 1117.3,616.9 1118.7,620.2 1120.1,616.1 1121.5,621.6 1122.9,615.3 1124.3,617.5 1125.6,616.8 1127.0,618.4 1128.5,615.4 1130.1,617.2 1131.6,613.7 1133.1,616.5 1134.6,616.6 1134.5,616.6 1135.0,587.1 1135.5,605.1 1136.0,618.4 1136.0,619.4 1137.5,614.9 1139.0,618.8 1140.4,618.5 1141.8,618.2 1143.2,617.3 1144.7,619.9 1146.1,617.3 1147.4,622.2 1148.8,616.9 1150.2,615.7 1151.6,617.8 1152.9,615.8 1154.4,613.8 1155.9,620.3 1157.4,615.2 1158.9,621.7 1160.3,617.5 1161.8,619.1 1163.2,614.7 1163.8,614.7 1164.3,604.4 1164.8,622.4 1165.3,616.5 1164.6,616.7 1166.1,616.6 1167.5,617.3 1168.9,617.3 1170.3,617.4 1171.6,615.3 1173.0,617.1 1174.4,616.5 1175.9,618.0 1177.3,615.9 1178.8,619.0 1180.3,615.0 1181.7,617.5 1183.2,614.5 1184.6,616.5 1186.0,616.3 1187.4,619.1 1188.8,620.0 1189.2,620.0 1189.7,593.6 1190.2,611.6 1190.7,621.8 1190.2,619.7 1191.6,616.6 1192.9,620.3 1194.3,617.1 1195.8,619.7 1197.3,613.2 1198.7,617.3 1200.2,617.1 1201.6,616.9 1203.0,618.2 1204.4,618.4 1205.9,618.4 1207.2,620.0 1208.6,616.6 1210.0,616.7 1211.4,613.7 1211.6,613.7 1212.1,606.2 1212.6,624.2 1213.1,615.5 1212.7,618.7 1214.2,613.9 1215.7,618.5 1217.1,616.6 1218.5,619.7 1220.0,614.6 1221.4,622.6 1222.8,615.8 1224.2,620.7 1225.6,614.0 1226.9,620.0 1228.3,615.5 1229.6,618.5 1231.1,617.7 1231.6,617.7 1232.1,594.0 1232.6,612.0 1233.1,619.5 1232.5,621.3 1234.0,615.7 1235.4,616.0 1236.8,618.2 1238.2,619.5 1239.6,613.9 1241.0,618.7 1242.4,616.1 1243.7,617.6 1245.1,616.3 1246.5,618.8 1247.9,615.9 1249.4,618.9 1250.8,613.9 1252.2,619.2 1253.6,614.3 1255.0,617.9 1256.3,614.9 1257.7,619.0 1259.0,616.1 1260.5,617.6 1261.9,617.0 1263.3,618.8 1264.7,615.2 1266.1,619.3 1266.3,619.3 1266.8,608.7 1267.3,626.7 1267.8,621.1 1267.5,618.5 1268.9,619.2 1270.3,618.4 1271.6,616.7 1273.1,615.7 1274.5,617.8 1275.9,614.9 1277.3,618.9 1278.7,615.6 1280.1,615.6 1281.4,616.0 1282.8,618.7 1284.2,615.4 1285.6,617.5 1287.0,615.0 1288.4,617.0 1289.8,616.9 1291.2,620.4 1292.6,617.2 1293.9,619.4 1295.3,613.5 1295.7,613.5 1296.2,604.8 1296.7,622.8 1297.2,615.3 1296.7,618.4 1298.1,617.7 1299.6,620.9 1300.9,617.6 1302.3,617.7 1303.7,617.3 1305.1,617.8 1306.4,617.2 1307.9,617.9 1309.3,616.3 1310.7,618.8 1312.0,616.7 1313.4,618.5 1314.8,614.4 1316.2,620.2 1317.6,617.6 1319.0,619.5 1320.4,617.8 1321.1,617.8 1321.6,613.4 1322.1,631.4 1322.6,619.6 1321.8,617.3 1323.2,614.0 1324.5,618.2 1325.9,617.0 1327.2,620.9 1328.6,615.8 1330.0,620.5 1331.4,614.6 1332.8,621.4 1334.2,618.1 1335.5,618.2 1336.9,616.1 1338.3,617.1 1339.7,615.5 1341.1,619.8 1342.5,616.0 1343.8,616.7 1345.2,615.7 1346.6,615.9 1348.0,616.4 1349.4,617.0 1350.7,615.4 1352.1,617.9 1353.5,617.2 1354.9,618.2 1356.3,615.1 1357.6,620.2 1359.0,616.3 1360.4,618.6 1361.7,616.5 1363.1,618.4 1364.5,617.4 1365.9,618.9 1367.2,616.2 1368.6,615.8 1370.0,618.1 1371.4,619.2 1372.8,616.2 1374.1,620.3 1375.5,617.9 1376.9,620.1 1378.3,617.4 1379.6,619.9 1381.0,616.7 1381.6,616.7 1382.1,609.8 1382.6,627.8 1383.1,618.5 1382.4,616.5 1383.7,617.0 1385.1,615.6 1386.5,616.4 1387.9,617.9 1389.3,615.9 1390.6,620.9 1392.0,615.5 1393.4,620.0 1394.8,615.4 1396.1,620.0 1397.5,613.8 1398.9,616.9 1400.2,617.4 1401.6,619.9 1403.0,615.6 1404.3,617.7 1405.7,616.0 1407.1,618.6 1408.4,616.5 1409.8,619.0 1411.2,615.6 1412.6,622.0 1413.9,617.3 1415.3,616.3 1416.7,615.8 1418.1,618.1 1419.4,616.0 1420.8,619.4 1422.2,616.6 1423.5,617.1 1424.9,614.7 1426.3,618.2 1427.6,615.4 1429.0,617.8 1430.4,617.3 1431.8,620.0 1433.1,616.6 1434.5,617.5 1435.9,617.0 1437.2,617.0 1438.6,618.7 1440.0,615.9 1441.3,616.2 1442.7,616.8 1444.0,615.3 1445.4,617.5 1446.8,614.8 1448.2,617.9 1449.5,616.2 1450.9,619.0 1452.3,614.7 1453.6,617.0 1455.0,614.2 1456.4,616.1 1457.7,618.3 1459.1,619.5 1460.5,614.2 1461.8,618.4 1463.2,618.5 1464.6,618.7 1465.9,616.9 1467.3,619.2 1468.7,615.7 1470.0,619.1 1471.4,614.7 1472.7,619.4 1474.1,617.1 1475.5,617.6 1475.3,617.6 1475.8,609.8 1476.3,627.8 1476.8,619.4 1476.8,617.4 1478.2,619.0 1479.6,616.9 1480.9,618.9 1482.3,616.3 1483.7,616.9 1485.0,615.1 1486.4,620.1 1487.8,615.3 1489.1,618.0 1490.5,616.4 1491.8,620.6 1493.2,617.4 1494.6,619.3 1495.9,617.7 1497.3,620.2 1498.7,616.0 1500.0,617.7 1501.4,614.6 1502.7,616.7 1504.1,617.1 1505.5,617.5 1506.8,615.7 1508.2,619.5 1509.6,616.8" fill="none" stroke="#d81010" stroke-width="1" stroke-linejoin="bevel" shape-rendering="crispEdges"/><polyline points="63.8,608.8 80.0,607.5 102.5,617.5 117.5,616.8 137.5,618.8 167.5,619.5 197.5,611.2 222.5,618.8 232.5,617.5 253.8,628.0 271.2,611.2 288.8,620.0 303.8,610.0 312.5,618.8 325.0,619.5 331.2,624.5 337.5,618.8 355.0,622.0 365.0,616.2 370.0,618.0 376.2,608.8 392.5,623.8 402.5,617.5 408.8,621.2 417.5,618.8 420.0,623.8 427.5,617.5 435.0,626.2 442.5,627.0 450.0,617.5 459.8,618.8 462.5,615.2 468.7,617.0 474.7,636.1 480.6,637.0 486.3,624.9 491.8,618.6 497.1,625.3 502.4,636.5 507.4,628.3 512.4,614.1 517.2,635.7 521.9,616.8 526.5,620.4 530.9,620.7 535.3,618.8 539.6,628.5 543.8,625.0 547.9,611.9 551.9,627.2 555.8,627.4 559.6,635.4 563.4,627.8 567.1,619.1 570.7,615.8 574.3,619.7 577.8,619.9 581.2,620.2 584.6,621.8 587.9,617.5 591.1,625.1 594.3,617.1 597.5,624.5 600.6,636.3 603.6,633.8 606.6,625.4 609.5,627.4 612.4,633.2 615.3,629.8 618.1,622.8 620.9,621.4 623.6,618.7 626.3,630.4 629.0,621.6 631.6,617.6 634.2,621.8 636.8,613.2 639.3,627.5 641.8,621.8 644.2,621.6 646.6,620.0 649.0,620.7 651.4,618.8 653.7,628.5 656.0,628.3 658.3,631.9 660.6,620.1 662.8,625.9 665.0,614.2 667.2,621.4 669.3,617.8 671.4,629.4 673.5,634.7 675.6,636.9 677.7,627.8 679.7,623.2 681.7,617.1 683.7,626.6 685.7,620.7 687.6,630.6 689.6,624.5 691.5,625.1 693.4,621.7 695.3,624.0 697.1,614.2 698.9,634.7 700.8,628.5 702.6,630.7 704.4,617.5 706.1,626.3 707.9,628.5 709.6,635.7 711.3,614.7 713.0,630.7 714.7,614.4 716.4,620.9 718.1,624.8 719.7,623.6 721.4,621.3 723.0,626.3 724.6,618.0 726.2,624.7 727.7,626.0 729.3,622.9 730.9,619.8 732.4,621.3 733.9,617.2 735.5,629.4 737.0,625.5 738.4,627.1 739.9,623.2 741.4,637.0 742.9,621.3 744.3,630.9 745.7,633.3 747.2,623.5 748.6,625.0 750.0,620.3 751.4,631.4 752.8,626.5 754.1,620.1 755.5,621.6 756.8,622.2 759.5,630.9 762.2,623.3 764.8,627.7 767.3,627.2 769.9,625.4 772.4,613.7 774.9,623.0 777.3,626.1 779.7,624.0 782.1,621.9 784.4,624.3 786.7,628.8 789.0,624.1 791.3,627.2 793.5,632.1 795.8,620.5 797.9,630.8 800.1,633.2 802.2,618.0 804.4,621.1 806.4,627.5 808.5,623.0 810.6,625.6 812.6,615.6 814.6,621.4 816.6,625.9 818.5,629.0 820.5,628.1 822.4,624.9 824.3,615.9 826.2,624.4 828.0,619.3 829.9,630.4 831.7,625.3 833.5,633.6 835.3,622.7 837.1,628.1 838.9,624.2 840.6,621.2 842.3,624.9 844.0,628.2 845.7,626.8 847.4,623.8 849.1,623.6 850.8,626.5 852.4,622.1 854.0,622.6 855.6,623.8 857.2,628.0 858.8,623.2 860.4,629.1 861.9,622.0 863.5,625.1 865.0,620.7 866.5,624.0 868.1,620.1 869.6,622.5 871.0,622.6 872.5,619.6 874.0,617.0 875.4,623.4 876.9,620.7 878.3,621.6 879.7,616.0 881.1,621.3 882.5,621.2 883.9,618.6 885.3,620.1 886.7,618.9 888.0,617.5 890.0,616.3 892.0,614.4 894.0,613.6 896.0,610.4 897.9,610.0 899.8,605.8 901.7,604.1 903.6,600.0 905.5,596.7 907.3,592.9 909.1,588.6 911.0,584.1 912.7,578.6 914.5,572.1 916.3,563.5 918.0,553.2 919.7,542.6 920.3,535.8 920.9,528.9 921.5,522.1 922.0,514.2 922.6,504.7 923.2,495.3 923.7,483.3 924.3,470.4 924.8,447.1 925.4,408.7 925.9,384.6 926.3,379.9 926.5,382.6 927.1,400.3 927.6,435.4 928.2,465.5 928.7,479.0 929.2,491.6 929.8,501.0 930.3,510.1 930.9,518.9 931.4,525.4 932.0,531.8 933.6,547.1 935.1,556.5 936.7,565.9 938.3,572.9 939.8,578.6 941.4,583.5 942.9,587.1 944.4,590.9 945.9,594.4 947.4,597.5 948.9,599.9 950.4,603.0 951.8,604.9 953.3,608.1 954.7,608.1 956.1,611.2 957.6,612.3 959.0,612.4 960.4,614.6 961.7,615.5 963.1,617.1 964.5,618.4 965.8,617.1 967.6,622.0 969.4,617.9 971.1,622.3 972.9,621.4 974.6,626.4 976.3,617.3 978.0,621.4 979.7,622.2 981.4,622.8 983.0,621.5 984.6,622.1 986.3,616.9 987.9,623.7 989.5,621.9 991.1,623.1 992.6,623.1 994.2,628.8 995.7,625.9 997.3,618.9 998.8,622.1 1000.3,628.8 1001.8,620.3 1002.6,620.3 1003.1,603.9 1003.6,621.9 1004.1,622.1 1003.3,622.6 1004.7,620.3 1006.2,622.7 1007.6,627.6 1009.1,621.2 1010.5,623.6 1011.9,622.9 1013.3,625.4 1014.7,624.4 1016.1,625.9 1017.5,621.1 1018.9,621.8 1020.2,624.3 1021.9,625.0 1023.6,622.8 1025.2,624.3 1026.9,631.9 1028.5,616.0 1030.1,624.2 1031.7,622.9 1033.3,626.1 1034.8,629.3 1036.4,627.4 1037.9,620.7 1039.5,622.0 1041.0,619.1 1042.5,625.0 1044.0,623.7 1045.5,629.1 1047.0,624.2 1048.4,622.9 1049.9,622.8 1051.3,620.8 1052.7,625.7 1054.2,623.2 1055.6,623.1 1057.0,621.8 1057.4,621.8 1057.9,565.7 1058.4,583.7 1058.9,623.6 1058.4,619.7 1059.7,625.5 1061.1,621.2 1062.5,625.3 1064.1,624.9 1065.7,627.6 1067.3,622.2 1068.8,626.7 1070.4,625.0 1072.0,629.9 1073.5,621.3 1075.0,623.4 1076.5,622.9 1078.0,624.7 1079.5,620.6 1081.0,624.8 1082.5,620.2 1083.9,624.5 1085.4,619.1 1086.8,629.8 1088.2,619.9 1089.6,627.1 1091.0,622.7 1092.4,626.6 1093.8,621.4 1095.2,621.1 1096.5,626.2 1097.9,628.8 1099.5,618.9 1099.8,618.9 1100.3,606.2 1100.8,624.2 1101.3,620.7 1101.0,631.8 1102.6,618.2 1104.1,623.3 1105.6,619.0 1107.1,629.2 1108.6,620.3 1110.1,625.1 1111.5,623.2 1113.0,625.3 1114.5,622.1 1115.9,627.3 1117.3,624.9 1118.7,621.1 1120.1,619.3 1121.5,625.7 1122.9,618.4 1124.3,624.8 1125.6,619.0 1127.0,629.7 1128.5,624.6 1130.1,624.7 1131.6,621.9 1133.1,627.6 1134.6,622.3 1134.5,622.3 1135.0,588.2 1135.5,606.2 1136.0,624.1 1136.0,632.6 1137.5,622.1 1139.0,626.1 1140.4,620.7 1141.8,624.1 1143.2,622.7 1144.7,625.8 1146.1,622.6 1147.4,621.8 1148.8,622.0 1150.2,623.8 1151.6,622.9 1152.9,623.6 1154.4,621.0 1155.9,622.8 1157.4,619.2 1158.9,623.6 1160.3,627.3 1161.8,622.5 1163.2,622.5 1163.8,622.5 1164.3,609.8 1164.8,627.8 1165.3,624.3 1164.6,621.3 1166.1,620.4 1167.5,623.8 1168.9,620.4 1170.3,621.4 1171.6,623.9 1173.0,625.0 1174.4,625.1 1175.9,629.9 1177.3,623.4 1178.8,621.5 1180.3,622.6 1181.7,624.6 1183.2,619.7 1184.6,630.0 1186.0,621.7 1187.4,625.7 1188.8,622.2 1189.2,622.2 1189.7,592.9 1190.2,610.9 1190.7,624.0 1190.2,622.2 1191.6,622.1 1192.9,624.3 1194.3,622.9 1195.8,626.1 1197.3,622.3 1198.7,625.0 1200.2,620.4 1201.6,624.6 1203.0,620.8 1204.4,623.5 1205.9,620.6 1207.2,630.1 1208.6,622.0 1210.0,621.3 1211.4,625.7 1211.6,625.7 1212.1,609.8 1212.6,627.8 1213.1,627.5 1212.7,621.8 1214.2,620.7 1215.7,624.1 1217.1,622.1 1218.5,624.8 1220.0,623.8 1221.4,622.0 1222.8,620.3 1224.2,626.6 1225.6,621.4 1226.9,627.4 1228.3,622.5 1229.6,625.9 1231.1,622.5 1231.6,622.5 1232.1,594.5 1232.6,612.5 1233.1,624.3 1232.5,621.3 1234.0,621.2 1235.4,621.2 1236.8,622.2 1238.2,629.1 1239.6,623.3 1241.0,623.2 1242.4,621.6 1243.7,625.4 1245.1,619.9 1246.5,627.9 1247.9,622.5 1249.4,623.7 1250.8,624.9 1252.2,628.6 1253.6,619.5 1255.0,628.6 1256.3,622.8 1257.7,628.8 1259.0,623.7 1260.5,626.8 1261.9,623.1 1263.3,624.4 1264.7,624.0 1266.1,626.1 1266.3,626.1 1266.8,611.6 1267.3,629.6 1267.8,627.9 1267.5,622.5 1268.9,626.7 1270.3,619.7 1271.6,626.5 1273.1,622.9 1274.5,626.0 1275.9,620.5 1277.3,629.7 1278.7,622.2 1280.1,627.4 1281.4,626.2 1282.8,626.4 1284.2,623.0 1285.6,623.1 1287.0,622.6 1288.4,626.1 1289.8,624.0 1291.2,627.1 1292.6,622.6 1293.9,625.9 1295.3,622.8 1295.7,622.8 1296.2,606.2 1296.7,624.2 1297.2,624.6 1296.7,623.7 1298.1,622.2 1299.6,627.7 1300.9,620.3 1302.3,622.0 1303.7,619.8 1305.1,630.7 1306.4,623.4 1307.9,627.5 1309.3,625.4 1310.7,626.9 1312.0,622.4 1313.4,625.9 1314.8,623.0 1316.2,629.6 1317.6,622.9 1319.0,625.8 1320.4,622.1 1321.8,625.2 1323.2,623.7 1324.5,626.3 1325.9,621.2 1327.2,624.2 1328.6,625.2 1330.0,623.1 1331.4,620.5 1332.8,624.0 1334.2,620.3 1335.5,627.4 1336.9,621.4 1338.3,623.8 1339.7,623.0 1341.1,626.9 1342.5,620.7 1343.8,627.4 1343.5,627.4 1344.0,611.6 1344.5,629.6 1345.0,629.2 1345.2,622.4 1346.6,629.2 1348.0,620.0 1349.4,626.4 1350.7,621.2 1352.1,626.4 1353.5,624.8 1354.9,624.9 1356.3,621.6 1357.6,627.1 1359.0,621.9 1360.4,625.7 1361.7,624.2 1363.1,627.0 1364.5,623.3 1365.9,629.1 1367.2,625.9 1368.6,624.8 1370.0,625.1 1371.4,626.1 1372.8,621.3 1374.1,629.4 1375.5,620.1 1376.9,628.5 1378.3,622.2 1379.6,623.9 1381.0,622.7 1382.4,627.7 1383.7,625.7 1385.1,624.4 1386.5,624.0 1387.9,622.8 1389.3,622.2 1390.6,623.6 1392.0,620.3 1393.4,626.1 1394.8,621.2 1396.1,627.0 1397.5,623.0 1398.9,628.1 1400.2,624.6 1401.6,623.2 1403.0,622.8 1404.3,624.2 1405.7,622.1 1407.1,627.6 1408.4,620.8 1409.8,626.1 1411.2,623.4 1412.6,625.9 1413.9,625.1 1415.3,630.8 1416.7,622.3 1418.1,630.1 1419.4,621.3 1420.8,627.0 1422.2,622.7 1423.5,626.3 1424.9,619.9 1426.3,626.3 1427.6,621.8 1429.0,623.1 1430.4,625.5 1431.8,625.9 1433.1,622.5 1434.5,626.4 1435.9,620.7 1437.2,628.0 1438.6,623.2 1440.0,623.9 1441.3,622.7 1442.7,625.6 1444.0,623.3 1445.4,622.6 1446.8,621.5 1448.2,628.2 1449.5,624.8 1450.9,626.4 1452.3,620.8 1453.6,628.4 1455.0,620.6 1456.4,625.1 1457.7,621.6 1459.1,628.4 1460.5,626.0 1461.8,625.4 1463.2,621.5 1464.6,627.8 1465.9,620.5 1467.3,624.7 1468.7,622.0 1470.0,625.3 1471.4,623.1 1472.7,628.9 1474.1,623.1 1475.5,626.8 1476.8,623.2 1478.2,623.5 1479.6,624.0 1480.9,628.1 1482.3,625.9 1483.7,622.9 1485.0,622.6 1486.4,625.9 1487.8,622.3 1489.1,626.0 1490.5,624.0 1491.8,627.2 1493.2,622.1 1494.6,626.6 1495.9,620.2 1497.3,623.5 1498.7,620.7 1500.0,625.9 1501.4,624.9 1502.7,626.9 1504.1,622.0 1505.5,626.2 1506.8,621.3 1508.2,624.5 1509.6,620.9" fill="none" stroke="#0808a8" stroke-width="1" stroke-linejoin="bevel" shape-rendering="crispEdges"/></g><text x="1481.5" y="79.6" font-family="Liberation Serif" font-size="22.5" font-style="italic" font-weight="bold" fill="#7c7c6c" textLength="13" lengthAdjust="spacingAndGlyphs">S</text><path d="M1496.5,74.5 H1506 M1502,70.5 L1501,79" stroke="#7c7c6c" stroke-width="1"/><rect x="64" y="635" width="1448" height="12" fill="#f6f6f6"/><rect x="64" y="647" width="1450" height="2" fill="#ffffff"/><rect x="64" y="635" width="17" height="12" fill="#444"/><rect x="64" y="635" width="16" height="11" fill="#fff"/><rect x="65" y="636" width="14" height="9" fill="#ececec"/><rect x="82" y="635" width="17" height="12" fill="#444"/><rect x="82" y="635" width="16" height="11" fill="#fff"/><rect x="83" y="636" width="14" height="9" fill="#ececec"/><rect x="1495" y="635" width="17" height="12" fill="#444"/><rect x="1495" y="635" width="16" height="11" fill="#fff"/><rect x="1496" y="636" width="14" height="9" fill="#ececec"/><path d="M70,640.5 L73.5,637 V644 Z" fill="#000"/><path d="M1504.5,640.5 L1501,637 V644 Z" fill="#000"/><path d="M181.5,647V650M258.5,647V650M313.5,647V650M355.5,647V650M390.5,647V650M419.5,647V650M445.5,647V650M467.5,647V650M487.5,647V650M619.5,647V650M696.5,647V650M751.5,647V650M793.5,647V650M828.5,647V650M857.5,647V650M883.5,647V650M905.5,647V650M925.5,647V650M1057.5,647V650M1134.5,647V650M1189.5,647V650M1231.5,647V650M1266.5,647V650M1295.5,647V650M1321.5,647V650M1343.5,647V650M1363.5,647V650M1495.5,647V650" stroke="#000" stroke-width="1"/><rect x="1520" y="57" width="25" height="295" fill="#fafafa"/><rect x="1520" y="57" width="24" height="2" fill="#a0a0a0"/><rect x="1520" y="57" width="2" height="294" fill="#a0a0a0"/><rect x="1522" y="59" width="22" height="278" fill="#ffffe1"/><rect x="1524" y="80" width="16" height="256" fill="#0000ff"/><path d="M1542,58.5H1545M1542,76.5H1545M1542,94.5H1545M1542,112.5H1545M1542,130.5H1545M1542,148.5H1545M1542,166.5H1545M1542,184.5H1545M1542,202.5H1545M1542,220.5H1545M1542,238.5H1545M1542,256.5H1545M1542,274.5H1545M1542,292.5H1545M1542,310.5H1545M1542,328.5H1545" stroke="#000" stroke-width="1"/><rect x="1520" y="355" width="25" height="295" fill="#fafafa"/><rect x="1520" y="355" width="24" height="2" fill="#a0a0a0"/><rect x="1520" y="355" width="2" height="294" fill="#a0a0a0"/><rect x="1522" y="357" width="22" height="278" fill="#ffffe1"/><rect x="1524" y="378" width="16" height="256" fill="#0000ff"/><path d="M1542,356.5H1545M1542,374.5H1545M1542,392.5H1545M1542,410.5H1545M1542,428.5H1545M1542,446.5H1545M1542,464.5H1545M1542,482.5H1545M1542,500.5H1545M1542,518.5H1545M1542,536.5H1545M1542,554.5H1545M1542,572.5H1545M1542,590.5H1545M1542,608.5H1545M1542,626.5H1545" stroke="#000" stroke-width="1"/></svg>
<div style="position:absolute;right:1541.7px;top:54.14px;font-size:12px;line-height:12px;white-space:nowrap;color:#000;">0.0</div>
<div style="position:absolute;left:1548px;top:54.14px;font-size:12px;line-height:12px;white-space:nowrap;color:#000;">0.0</div>
<div style="position:absolute;right:1541.7px;top:71.14px;font-size:12px;line-height:12px;white-space:nowrap;color:#000;">-10.0</div>
<div style="position:absolute;left:1548px;top:71.14px;font-size:12px;line-height:12px;white-space:nowrap;color:#000;">-10.0</div>
<div style="position:absolute;right:1541.7px;top:89.14px;font-size:12px;line-height:12px;white-space:nowrap;color:#000;">-20.0</div>
<div style="position:absolute;left:1548px;top:89.14px;font-size:12px;line-height:12px;white-space:nowrap;color:#000;">-20.0</div>
<div style="position:absolute;right:1541.7px;top:107.14px;font-size:12px;line-height:12px;white-space:nowrap;color:#000;">-30.0</div>
<div style="position:absolute;left:1548px;top:107.14px;font-size:12px;line-height:12px;white-space:nowrap;color:#000;">-30.0</div>
<div style="position:absolute;right:1541.7px;top:125.14px;font-size:12px;line-height:12px;white-space:nowrap;color:#000;">-40.0</div>
<div style="position:absolute;left:1548px;top:125.14px;font-size:12px;line-height:12px;white-space:nowrap;color:#000;">-40.0</div>
<div style="position:absolute;right:1541.7px;top:143.14px;font-size:12px;line-height:12px;white-space:nowrap;color:#000;">-50.0</div>
<div style="position:absolute;left:1548px;top:143.14px;font-size:12px;line-height:12px;white-space:nowrap;color:#000;">-50.0</div>
<div style="position:absolute;right:1541.7px;top:161.14px;font-size:12px;line-height:12px;white-space:nowrap;color:#000;">-60.0</div>
<div style="position:absolute;left:1548px;top:161.14px;font-size:12px;line-height:12px;white-space:nowrap;color:#000;">-60.0</div>
<div style="position:absolute;right:1541.7px;top:179.14px;font-size:12px;line-height:12px;white-space:nowrap;color:#000;">-70.0</div>
<div style="position:absolute;left:1548px;top:179.14px;font-size:12px;line-height:12px;white-space:nowrap;color:#000;">-70.0</div>
<div style="position:absolute;right:1541.7px;top:197.14px;font-size:12px;line-height:12px;white-space:nowrap;color:#000;">-80.0</div>
<div style="position:absolute;left:1548px;top:197.14px;font-size:12px;line-height:12px;white-space:nowrap;color:#000;">-80.0</div>
<div style="position:absolute;right:1541.7px;top:215.14px;font-size:12px;line-height:12px;white-space:nowrap;color:#000;">-90.0</div>
<div style="position:absolute;left:1548px;top:215.14px;font-size:12px;line-height:12px;white-space:nowrap;color:#000;">-90.0</div>
<div style="position:absolute;right:1541.7px;top:233.14px;font-size:12px;line-height:12px;white-space:nowrap;color:#000;">-100.0</div>
<div style="position:absolute;left:1548px;top:233.14px;font-size:12px;line-height:12px;white-space:nowrap;color:#000;">-100.0</div>
<div style="position:absolute;right:1541.7px;top:251.14px;font-size:12px;line-height:12px;white-space:nowrap;color:#000;">-110.0</div>
<div style="position:absolute;left:1548px;top:251.14px;font-size:12px;line-height:12px;white-space:nowrap;color:#000;">-110.0</div>
<div style="position:absolute;right:1541.7px;top:269.14px;font-size:12px;line-height:12px;white-space:nowrap;color:#000;">-120.0</div>
<div style="position:absolute;left:1548px;top:269.14px;font-size:12px;line-height:12px;white-space:nowrap;color:#000;">-120.0</div>
<div style="position:absolute;right:1541.7px;top:287.14px;font-size:12px;line-height:12px;white-space:nowrap;color:#000;">-130.0</div>
<div style="position:absolute;left:1548px;top:287.14px;font-size:12px;line-height:12px;white-space:nowrap;color:#000;">-130.0</div>
<div style="position:absolute;right:1541.7px;top:305.14px;font-size:12px;line-height:12px;white-space:nowrap;color:#000;">-140.0</div>
<div style="position:absolute;left:1548px;top:305.14px;font-size:12px;line-height:12px;white-space:nowrap;color:#000;">-140.0</div>
<div style="position:absolute;right:1541.7px;top:323.14px;font-size:12px;line-height:12px;white-space:nowrap;color:#000;">-150.0</div>
<div style="position:absolute;left:1548px;top:323.14px;font-size:12px;line-height:12px;white-space:nowrap;color:#000;">-150.0</div>
<div style="position:absolute;left:-85px;top:198px;width:200px;height:14px;line-height:14px;text-align:center;font-size:12px;letter-spacing:0.62px;transform:rotate(-90deg);white-space:nowrap">Relative Amplitude (dBr)</div>
<div style="position:absolute;left:1563px;top:60.5px;width:60px;height:14px;line-height:14px;text-align:center;font-size:12px;transform:rotate(-90deg);white-space:nowrap">Set</div>
<div style="position:absolute;left:1585px;top:80px;width:14px;height:14px;box-sizing:border-box;background:#efefef;border-top:1px solid #fff;border-left:1px solid #fff;border-bottom:2px solid #5a5a5a;border-right:2px solid #5a5a5a"></div>
<div style="position:absolute;left:1588px;top:81.84px;font-size:12px;line-height:12px;white-space:nowrap;color:#000;">1</div>
<div style="position:absolute;left:1585px;top:96px;width:14px;height:14px;box-sizing:border-box;background:#efefef;border-top:1px solid #fff;border-left:1px solid #fff;border-bottom:2px solid #5a5a5a;border-right:2px solid #5a5a5a"></div>
<div style="position:absolute;left:1588px;top:97.84px;font-size:12px;line-height:12px;white-space:nowrap;color:#000;">2</div>
<div style="position:absolute;left:1585px;top:112px;width:14px;height:14px;box-sizing:border-box;background:#efefef;border-top:1px solid #fff;border-left:1px solid #fff;border-bottom:2px solid #5a5a5a;border-right:2px solid #5a5a5a"></div>
<div style="position:absolute;left:1588px;top:113.84px;font-size:12px;line-height:12px;white-space:nowrap;color:#000;">3</div>
<div style="position:absolute;left:1585px;top:128px;width:14px;height:14px;box-sizing:border-box;background:#efefef;border-top:1px solid #fff;border-left:1px solid #fff;border-bottom:2px solid #5a5a5a;border-right:2px solid #5a5a5a"></div>
<div style="position:absolute;left:1588px;top:129.84px;font-size:12px;line-height:12px;white-space:nowrap;color:#000;">4</div>
<div style="position:absolute;left:1585px;top:144px;width:14px;height:14px;box-sizing:border-box;background:#efefef;border-top:1px solid #fff;border-left:1px solid #fff;border-bottom:2px solid #5a5a5a;border-right:2px solid #5a5a5a"></div>
<div style="position:absolute;left:1588px;top:145.84px;font-size:12px;line-height:12px;white-space:nowrap;color:#000;">5</div>
<div style="position:absolute;left:1585px;top:160px;width:14px;height:14px;box-sizing:border-box;background:#efefef;border-top:1px solid #fff;border-left:1px solid #fff;border-bottom:2px solid #5a5a5a;border-right:2px solid #5a5a5a"></div>
<div style="position:absolute;left:1588px;top:161.84px;font-size:12px;line-height:12px;white-space:nowrap;color:#000;">6</div>
<div style="position:absolute;left:1585px;top:176px;width:14px;height:14px;box-sizing:border-box;background:#efefef;border-top:1px solid #fff;border-left:1px solid #fff;border-bottom:2px solid #5a5a5a;border-right:2px solid #5a5a5a"></div>
<div style="position:absolute;left:1588px;top:177.84px;font-size:12px;line-height:12px;white-space:nowrap;color:#000;">C</div>
<div style="position:absolute;left:1582px;top:194px;width:30px;height:17px;box-sizing:border-box;background:#efefef;border-top:1px solid #fff;border-left:1px solid #fff;border-bottom:2px solid #5a5a5a;border-right:2px solid #5a5a5a"></div>
<div style="position:absolute;left:1588px;top:196.84px;font-size:12px;line-height:12px;white-space:nowrap;color:#000;">O<span style="color:#8b0000">p</span></div>
<div style="position:absolute;right:1541.7px;top:352.14px;font-size:12px;line-height:12px;white-space:nowrap;color:#000;">0.0</div>
<div style="position:absolute;left:1548px;top:352.14px;font-size:12px;line-height:12px;white-space:nowrap;color:#000;">0.0</div>
<div style="position:absolute;right:1541.7px;top:369.14px;font-size:12px;line-height:12px;white-space:nowrap;color:#000;">-10.0</div>
<div style="position:absolute;left:1548px;top:369.14px;font-size:12px;line-height:12px;white-space:nowrap;color:#000;">-10.0</div>
<div style="position:absolute;right:1541.7px;top:387.14px;font-size:12px;line-height:12px;white-space:nowrap;color:#000;">-20.0</div>
<div style="position:absolute;left:1548px;top:387.14px;font-size:12px;line-height:12px;white-space:nowrap;color:#000;">-20.0</div>
<div style="position:absolute;right:1541.7px;top:405.14px;font-size:12px;line-height:12px;white-space:nowrap;color:#000;">-30.0</div>
<div style="position:absolute;left:1548px;top:405.14px;font-size:12px;line-height:12px;white-space:nowrap;color:#000;">-30.0</div>
<div style="position:absolute;right:1541.7px;top:423.14px;font-size:12px;line-height:12px;white-space:nowrap;color:#000;">-40.0</div>
<div style="position:absolute;left:1548px;top:423.14px;font-size:12px;line-height:12px;white-space:nowrap;color:#000;">-40.0</div>
<div style="position:absolute;right:1541.7px;top:441.14px;font-size:12px;line-height:12px;white-space:nowrap;color:#000;">-50.0</div>
<div style="position:absolute;left:1548px;top:441.14px;font-size:12px;line-height:12px;white-space:nowrap;color:#000;">-50.0</div>
<div style="position:absolute;right:1541.7px;top:459.14px;font-size:12px;line-height:12px;white-space:nowrap;color:#000;">-60.0</div>
<div style="position:absolute;left:1548px;top:459.14px;font-size:12px;line-height:12px;white-space:nowrap;color:#000;">-60.0</div>
<div style="position:absolute;right:1541.7px;top:477.14px;font-size:12px;line-height:12px;white-space:nowrap;color:#000;">-70.0</div>
<div style="position:absolute;left:1548px;top:477.14px;font-size:12px;line-height:12px;white-space:nowrap;color:#000;">-70.0</div>
<div style="position:absolute;right:1541.7px;top:495.14px;font-size:12px;line-height:12px;white-space:nowrap;color:#000;">-80.0</div>
<div style="position:absolute;left:1548px;top:495.14px;font-size:12px;line-height:12px;white-space:nowrap;color:#000;">-80.0</div>
<div style="position:absolute;right:1541.7px;top:513.14px;font-size:12px;line-height:12px;white-space:nowrap;color:#000;">-90.0</div>
<div style="position:absolute;left:1548px;top:513.14px;font-size:12px;line-height:12px;white-space:nowrap;color:#000;">-90.0</div>
<div style="position:absolute;right:1541.7px;top:531.14px;font-size:12px;line-height:12px;white-space:nowrap;color:#000;">-100.0</div>
<div style="position:absolute;left:1548px;top:531.14px;font-size:12px;line-height:12px;white-space:nowrap;color:#000;">-100.0</div>
<div style="position:absolute;right:1541.7px;top:549.14px;font-size:12px;line-height:12px;white-space:nowrap;color:#000;">-110.0</div>
<div style="position:absolute;left:1548px;top:549.14px;font-size:12px;line-height:12px;white-space:nowrap;color:#000;">-110.0</div>
<div style="position:absolute;right:1541.7px;top:567.14px;font-size:12px;line-height:12px;white-space:nowrap;color:#000;">-120.0</div>
<div style="position:absolute;left:1548px;top:567.14px;font-size:12px;line-height:12px;white-space:nowrap;color:#000;">-120.0</div>
<div style="position:absolute;right:1541.7px;top:585.14px;font-size:12px;line-height:12px;white-space:nowrap;color:#000;">-130.0</div>
<div style="position:absolute;left:1548px;top:585.14px;font-size:12px;line-height:12px;white-space:nowrap;color:#000;">-130.0</div>
<div style="position:absolute;right:1541.7px;top:603.14px;font-size:12px;line-height:12px;white-space:nowrap;color:#000;">-140.0</div>
<div style="position:absolute;left:1548px;top:603.14px;font-size:12px;line-height:12px;white-space:nowrap;color:#000;">-140.0</div>
<div style="position:absolute;right:1541.7px;top:621.14px;font-size:12px;line-height:12px;white-space:nowrap;color:#000;">-150.0</div>
<div style="position:absolute;left:1548px;top:621.14px;font-size:12px;line-height:12px;white-space:nowrap;color:#000;">-150.0</div>
<div style="position:absolute;left:-85px;top:496px;width:200px;height:14px;line-height:14px;text-align:center;font-size:12px;letter-spacing:0.62px;transform:rotate(-90deg);white-space:nowrap">Relative Amplitude (dBr)</div>
<div style="position:absolute;left:1563px;top:358.5px;width:60px;height:14px;line-height:14px;text-align:center;font-size:12px;transform:rotate(-90deg);white-space:nowrap">Set</div>
<div style="position:absolute;left:1585px;top:378px;width:14px;height:14px;box-sizing:border-box;background:#efefef;border-top:1px solid #fff;border-left:1px solid #fff;border-bottom:2px solid #5a5a5a;border-right:2px solid #5a5a5a"></div>
<div style="position:absolute;left:1588px;top:379.84px;font-size:12px;line-height:12px;white-space:nowrap;color:#000;">1</div>
<div style="position:absolute;left:1585px;top:394px;width:14px;height:14px;box-sizing:border-box;background:#efefef;border-top:1px solid #fff;border-left:1px solid #fff;border-bottom:2px solid #5a5a5a;border-right:2px solid #5a5a5a"></div>
<div style="position:absolute;left:1588px;top:395.84px;font-size:12px;line-height:12px;white-space:nowrap;color:#000;">2</div>
<div style="position:absolute;left:1585px;top:410px;width:14px;height:14px;box-sizing:border-box;background:#efefef;border-top:1px solid #fff;border-left:1px solid #fff;border-bottom:2px solid #5a5a5a;border-right:2px solid #5a5a5a"></div>
<div style="position:absolute;left:1588px;top:411.84px;font-size:12px;line-height:12px;white-space:nowrap;color:#000;">3</div>
<div style="position:absolute;left:1585px;top:426px;width:14px;height:14px;box-sizing:border-box;background:#efefef;border-top:1px solid #fff;border-left:1px solid #fff;border-bottom:2px solid #5a5a5a;border-right:2px solid #5a5a5a"></div>
<div style="position:absolute;left:1588px;top:427.84px;font-size:12px;line-height:12px;white-space:nowrap;color:#000;">4</div>
<div style="position:absolute;left:1585px;top:442px;width:14px;height:14px;box-sizing:border-box;background:#efefef;border-top:1px solid #fff;border-left:1px solid #fff;border-bottom:2px solid #5a5a5a;border-right:2px solid #5a5a5a"></div>
<div style="position:absolute;left:1588px;top:443.84px;font-size:12px;line-height:12px;white-space:nowrap;color:#000;">5</div>
<div style="position:absolute;left:1585px;top:458px;width:14px;height:14px;box-sizing:border-box;background:#efefef;border-top:1px solid #fff;border-left:1px solid #fff;border-bottom:2px solid #5a5a5a;border-right:2px solid #5a5a5a"></div>
<div style="position:absolute;left:1588px;top:459.84px;font-size:12px;line-height:12px;white-space:nowrap;color:#000;">6</div>
<div style="position:absolute;left:1585px;top:474px;width:14px;height:14px;box-sizing:border-box;background:#efefef;border-top:1px solid #fff;border-left:1px solid #fff;border-bottom:2px solid #5a5a5a;border-right:2px solid #5a5a5a"></div>
<div style="position:absolute;left:1588px;top:475.84px;font-size:12px;line-height:12px;white-space:nowrap;color:#000;">C</div>
<div style="position:absolute;left:1582px;top:492px;width:30px;height:17px;box-sizing:border-box;background:#efefef;border-top:1px solid #fff;border-left:1px solid #fff;border-bottom:2px solid #5a5a5a;border-right:2px solid #5a5a5a"></div>
<div style="position:absolute;left:1588px;top:494.84px;font-size:12px;line-height:12px;white-space:nowrap;color:#000;">O<span style="color:#8b0000">p</span></div>
<div style="position:absolute;left:-18.5px;width:400px;text-align:center;top:651.84px;font-size:12px;line-height:12px;white-space:nowrap;color:#000;">20</div>
<div style="position:absolute;left:58.5px;width:400px;text-align:center;top:651.84px;font-size:12px;line-height:12px;white-space:nowrap;color:#000;">30</div>
<div style="position:absolute;left:113.5px;width:400px;text-align:center;top:651.84px;font-size:12px;line-height:12px;white-space:nowrap;color:#000;">40</div>
<div style="position:absolute;left:155.5px;width:400px;text-align:center;top:651.84px;font-size:12px;line-height:12px;white-space:nowrap;color:#000;">50</div>
<div style="position:absolute;left:190.5px;width:400px;text-align:center;top:651.84px;font-size:12px;line-height:12px;white-space:nowrap;color:#000;">60</div>
<div style="position:absolute;left:245.5px;width:400px;text-align:center;top:651.84px;font-size:12px;line-height:12px;white-space:nowrap;color:#000;">80</div>
<div style="position:absolute;left:287.5px;width:400px;text-align:center;top:651.84px;font-size:12px;line-height:12px;white-space:nowrap;color:#000;">100</div>
<div style="position:absolute;left:419.5px;width:400px;text-align:center;top:651.84px;font-size:12px;line-height:12px;white-space:nowrap;color:#000;">200</div>
<div style="position:absolute;left:496.5px;width:400px;text-align:center;top:651.84px;font-size:12px;line-height:12px;white-space:nowrap;color:#000;">300</div>
<div style="position:absolute;left:551.5px;width:400px;text-align:center;top:651.84px;font-size:12px;line-height:12px;white-space:nowrap;color:#000;">400</div>
<div style="position:absolute;left:593.5px;width:400px;text-align:center;top:651.84px;font-size:12px;line-height:12px;white-space:nowrap;color:#000;">500</div>
<div style="position:absolute;left:628.5px;width:400px;text-align:center;top:651.84px;font-size:12px;line-height:12px;white-space:nowrap;color:#000;">600</div>
<div style="position:absolute;left:683.5px;width:400px;text-align:center;top:651.84px;font-size:12px;line-height:12px;white-space:nowrap;color:#000;">800</div>
<div style="position:absolute;left:725.5px;width:400px;text-align:center;top:651.84px;font-size:12px;line-height:12px;white-space:nowrap;color:#000;">1.0k</div>
<div style="position:absolute;left:857.5px;width:400px;text-align:center;top:651.84px;font-size:12px;line-height:12px;white-space:nowrap;color:#000;">2.0k</div>
<div style="position:absolute;left:934.5px;width:400px;text-align:center;top:651.84px;font-size:12px;line-height:12px;white-space:nowrap;color:#000;">3.0k</div>
<div style="position:absolute;left:989.5px;width:400px;text-align:center;top:651.84px;font-size:12px;line-height:12px;white-space:nowrap;color:#000;">4.0k</div>
<div style="position:absolute;left:1031.5px;width:400px;text-align:center;top:651.84px;font-size:12px;line-height:12px;white-space:nowrap;color:#000;">5.0k</div>
<div style="position:absolute;left:1066.5px;width:400px;text-align:center;top:651.84px;font-size:12px;line-height:12px;white-space:nowrap;color:#000;">6.0k</div>
<div style="position:absolute;left:1121.5px;width:400px;text-align:center;top:651.84px;font-size:12px;line-height:12px;white-space:nowrap;color:#000;">8.0k</div>
<div style="position:absolute;left:1163.5px;width:400px;text-align:center;top:651.84px;font-size:12px;line-height:12px;white-space:nowrap;color:#000;">10.0k</div>
<div style="position:absolute;left:1295.5px;width:400px;text-align:center;top:651.84px;font-size:12px;line-height:12px;white-space:nowrap;color:#000;">20.0k</div>
<div style="position:absolute;left:642px;width:400px;text-align:center;top:664.84px;font-size:12px;line-height:12px;white-space:nowrap;color:#000;">Frequency (Hz)</div>
<div style="position:absolute;left:1332.5px;width:400px;text-align:center;top:651.84px;font-size:12px;line-height:12px;white-space:nowrap;color:#000;">Pwr</div>
<div style="position:absolute;left:1528px;top:665px;width:10px;height:11px;box-sizing:border-box;border:1px solid #555;background:#fff"></div>
<div style="position:absolute;left:480px;top:135px;width:180px;height:72px;box-sizing:border-box;border:1px solid #8e8e8e;border-radius:2px;background:radial-gradient(ellipse 25% 45% at 50% 30%,#f0f0f0 0%,#f8f8f8 70%,#fcfcfc 100%);box-shadow:2px 2px 5px rgba(60,60,0,0.35)"></div>
<div style="position:absolute;left:489px;top:142.04px;font-size:12px;line-height:12px;white-space:nowrap;color:#000;">THD+N</div>
<div style="position:absolute;left:637px;top:141px;width:17px;height:16px;box-sizing:border-box;border:1px solid #8a8a8a;border-radius:2px;background:#f8f8f8"></div>
<svg style="position:absolute;left:637px;top:141px" width="17" height="16"><path d="M5.5,5.5 L11.5,10.5 M11.5,5.5 L5.5,10.5" stroke="#3a3a3a" stroke-width="1.25"/><path d="M4.5,5 H7 M10,5 H12.5 M4.5,11 H7 M10,11 H12.5" stroke="#2a2a2a" stroke-width="1"/></svg>
<div style="position:absolute;left:486px;top:159px;width:168px;height:42px;box-sizing:border-box;border:1px solid #777;background:#fff"></div>
<div style="position:absolute;left:487px;top:160px;width:166px;height:1px;background:#000"></div>
<div style="position:absolute;left:487px;top:160px;width:1px;height:40px;background:#000"></div>
<div style="position:absolute;left:488px;top:180px;width:165px;height:1px;background:#000"></div>
<div style="position:absolute;left:491px;top:163.71px;font-size:15.7px;line-height:15.7px;white-space:nowrap;color:#000;">0.000373 %</div>
<div style="position:absolute;left:491px;top:182.71px;font-size:15.7px;line-height:15.7px;white-space:nowrap;color:#000;">0.000690 %</div>
<div style="position:absolute;left:671px;top:295px;width:66px;height:67px;box-sizing:border-box;border:1px solid #8e8e8e;border-radius:2px;background:radial-gradient(ellipse 40% 40% at 50% 30%,#eeeeee 0%,#f7f7f7 60%,#fbfbfb 100%);box-shadow:2px 2px 5px rgba(60,60,0,0.35)"></div>
<div style="position:absolute;left:715px;top:299px;width:16px;height:17px;box-sizing:border-box;border:1px solid #8a8a8a;border-radius:2px;background:#f8f8f8"></div>
<svg style="position:absolute;left:715px;top:299px" width="16" height="17"><path d="M5,6 L11,11 M11,6 L5,11" stroke="#3a3a3a" stroke-width="1.25"/><path d="M4,5.5 H6.5 M9.5,5.5 H12 M4,11.5 H6.5 M9.5,11.5 H12" stroke="#2a2a2a" stroke-width="1"/></svg>
<div style="position:absolute;left:677px;top:318px;width:55px;height:38px;box-sizing:border-box;border:1px solid #444;background:#f0f0f0"></div>
<div style="position:absolute;left:683px;top:324px;width:43px;height:27px;box-sizing:border-box;background:#ececec;border-top:1px solid #fff;border-left:1px solid #fff;border-bottom:2px solid #8c8c8c;border-right:2px solid #8c8c8c"></div>
<div style="position:absolute;left:691px;top:330.84px;font-size:12px;line-height:12px;white-space:nowrap;color:#000;">Stop</div>
</body></html>
